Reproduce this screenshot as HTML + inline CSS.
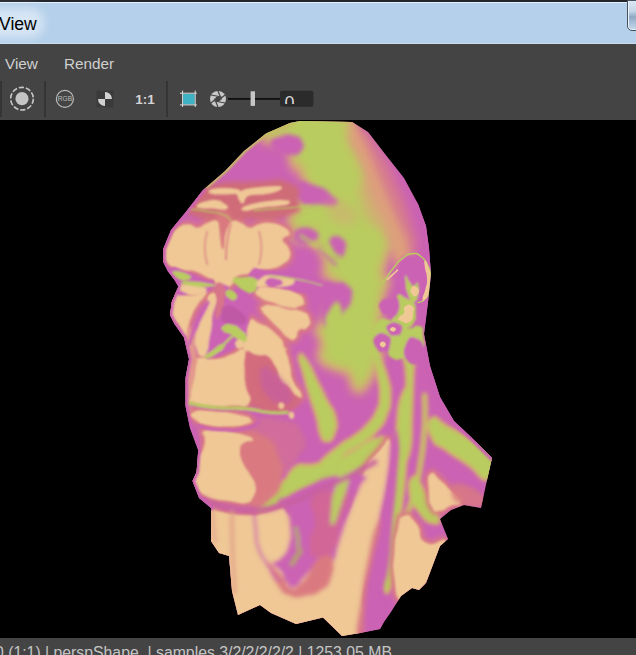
<!DOCTYPE html>
<html>
<head>
<meta charset="utf-8">
<title>Render View</title>
<style>
html,body{margin:0;padding:0;}
body{width:636px;height:655px;overflow:hidden;background:#000;position:relative;font-family:"Liberation Sans",sans-serif;}
#topstrip{position:absolute;left:0;top:0;width:636px;height:2px;background:#23262b;}
#titlebar{position:absolute;left:0;top:2px;width:636px;height:42px;background:#b4d0ea;box-shadow:inset 0 1px 0 #e6f0fa, inset 0 -1px 0 #cadcee;}
#titlebar .glow{position:absolute;left:-20px;top:6px;width:64px;height:30px;border-radius:14px;background:#d6e5f4;filter:blur(5px);}
#titlebar .t{position:absolute;left:-1px;top:12.2px;font-size:17.6px;color:#000;line-height:20px;}
#capbtn{position:absolute;left:627px;top:-2px;width:20px;height:29px;border:1px solid #46525f;border-radius:0 0 0 5px;background:linear-gradient(#dbe8f4 0%,#c4d6e8 35%,#8ea8c2 55%,#a9c0d8 75%,#c6d9ec 100%);box-shadow:inset 1px 0 0 #eef4fb, inset 0 -1px 0 #e4eef8;}
#menubar{position:absolute;left:0;top:44px;width:636px;height:76px;background:#444444;}
.menu{position:absolute;top:9.6px;font-size:15.3px;line-height:20px;color:#cfcfcf;}
.sep{position:absolute;top:37px;width:2px;height:36px;background:#343434;}
#viewport{position:absolute;left:0;top:120px;width:636px;height:518px;background:#000;}
#status{position:absolute;left:0;top:638px;width:636px;height:17px;background:#444444;color:#c4c4c4;font-size:15.8px;line-height:20px;white-space:pre;overflow:hidden;}
#status span{position:absolute;left:-5px;top:4.500px;}
#head{position:absolute;left:0;top:0;}
</style>
</head>
<body>
<div id="topstrip"></div>
<div id="titlebar"><div class="glow"></div><div class="t">View</div><div id="capbtn"></div></div>
<div id="menubar">
  <div class="menu" style="left:5px">View</div>
  <div class="menu" style="left:64px">Render</div>
  <div class="sep" style="left:0px"></div>
  <div class="sep" style="left:44px"></div>
  <div class="sep" style="left:166px"></div>
  <svg id="icons" width="636" height="76" style="position:absolute;left:0;top:0">
    <!-- record icon -->
    <circle cx="22" cy="54.7" r="11.3" fill="none" stroke="#c8c8c8" stroke-width="1.6" stroke-dasharray="5.2 1.9"/>
    <circle cx="22" cy="54.7" r="6.6" fill="#c4c4c4"/>
    <!-- RGB icon -->
    <circle cx="64.9" cy="54.9" r="8.5" fill="none" stroke="#bdbdbd" stroke-width="1.2"/>
    <text x="64.9" y="57.4" font-family="Liberation Sans, sans-serif" font-size="6.6" fill="#bdbdbd" text-anchor="middle">RGB</text>
    <!-- checker icon -->
    <rect x="96.5" y="46.5" width="17" height="17" fill="#3a3a3a"/>
    <path d="M105 54.9 L105 48 A7 7 0 0 1 112 54.9 Z" fill="#d0d0d0"/>
    <path d="M105 54.9 L105 62 A7 7 0 0 1 98 54.9 Z" fill="#d0d0d0"/>
    <!-- 1:1 -->
    <text x="145" y="60" font-family="Liberation Sans, sans-serif" font-size="13.5" font-weight="bold" fill="#d4d4d4" text-anchor="middle">1:1</text>
    <!-- crop icon -->
    <rect x="183.1" y="49.8" width="11.6" height="10.6" fill="#3fb3c4"/>
    <path d="M182.6 46.6 V63 M195.2 46.6 V63 M180 49.2 H196.8 M180 60.9 H196.8" stroke="#dedede" stroke-width="1" fill="none"/>
    <!-- aperture -->
    <circle cx="218" cy="55" r="8" fill="#c8c8c8"/>
    <g stroke="#444" stroke-width="1.2" fill="none">
      <path d="M218 47 L221.5 55.5 M225 51 L217 57.5 M225 59 L214.5 57 M218 63 L214.5 54.5 M211 59 L219 52.5 M211 51 L221.5 53"/>
    </g>
    <circle cx="218" cy="55" r="2.6" fill="#444"/>
    <!-- slider -->
    <rect x="228" y="54" width="52" height="1.800" fill="#101010"/>
    <rect x="250.600" y="47.3" width="4.4" height="14.6" fill="#c6c6c6"/>
    <rect x="280" y="46.8" width="33.4" height="16" rx="2" fill="#2b2b2b"/>
  </svg>
  <div style="position:absolute;left:280px;top:47px;width:33px;height:13px;overflow:hidden;"><div style="position:absolute;left:4.500px;top:1.500px;font-size:18px;line-height:20px;color:#d8d8d8;">0</div></div>
</div>
<div id="viewport">
<svg id="head" width="636" height="518" viewBox="0 120 636 518">
<defs>
<clipPath id="sil"><path id="silp" d="M300 121 L352 122 L368 132 L385 154 L404 178 L418 204 L426 226 L429 248 L431 274 L428 302 L424 334 L430 366 L440 397 L454 421 L470 436 L492 458 L487 480 L481 508 L464 505 L451 510 L440 519 L448 539 L440 546 L426 583 L419 590 L412 588 L401 596 L391 612 L384 622 L380 629 L360 633 L342 636 L323 617.5 L296 624 L271 613 L260 605 L238 615 L232 591 L229 556 L219 553 L211 541 L211 508 L199 498 L192.5 481 L196.6 472 L198.2 450 L190 428 L185.5 406 L185.5 378 L189 359 L186.8 350 L184 337.5 L174.5 324 L170 315 L171.7 302 L178.3 286.6 L174.5 280 L168 271.5 L163.2 262 L163.2 249 L171 230 L187 210.5 L203 190 L225 171 L244 151 L266 133.5 L290 123 Z"/></clipPath>
<filter id="b2" x="-20%" y="-20%" width="140%" height="140%"><feGaussianBlur stdDeviation="2"/></filter>
<filter id="b3" x="-20%" y="-20%" width="140%" height="140%"><feGaussianBlur stdDeviation="3.500"/></filter>
<filter id="b5" x="-20%" y="-20%" width="140%" height="140%"><feGaussianBlur stdDeviation="5"/></filter>
<filter id="b05" x="-20%" y="-20%" width="140%" height="140%"><feGaussianBlur stdDeviation="0.5"/></filter>
<filter id="b12" x="-20%" y="-20%" width="140%" height="140%"><feGaussianBlur stdDeviation="1.2"/></filter>
<filter id="b25" x="-20%" y="-20%" width="140%" height="140%"><feGaussianBlur stdDeviation="2.500"/></filter>
<filter id="b1" x="-20%" y="-20%" width="140%" height="140%"><feGaussianBlur stdDeviation="1"/></filter>
</defs>
<g clip-path="url(#sil)">
<rect x="150" y="115" width="360" height="530" fill="#cb62b3"/>
<!--LAYERS-->
<g id="fade" filter="url(#b5)">
<path d="M347.9 119.8 C349.9 117.2 350.5 114.6 361.7 125.7 C372.8 136.9 369.5 133.6 381.3 153.2 C393.1 172.9 387.5 162.4 397.1 184.7 C406.6 207.0 403.9 199.1 410.0 220.1 C416.2 241.0 417.9 233.8 415.5 247.6 C413.2 261.3 409.8 269.2 403.0 261.3 C396.1 253.5 401.6 244.3 395.1 224.0 C388.5 203.7 389.9 216.1 383.3 200.4 C376.8 184.7 381.3 192.5 375.4 176.8 C369.5 161.1 372.2 167.7 365.6 153.2 C359.1 138.8 361.7 144.7 355.8 133.6 C349.9 122.4 346.0 122.4 347.9 119.8 Z" fill="#d67a8e"/>
<path d="M344.0 119.8 C346.6 119.2 348.6 122.4 355.8 133.6 C363.0 144.7 359.1 138.8 365.6 153.2 C372.2 167.7 369.5 161.1 375.4 176.8 C381.3 192.5 376.8 184.7 383.3 200.4 C389.9 216.1 388.5 209.6 395.1 224.0 C401.6 238.4 399.7 231.9 403.0 243.6 C406.2 255.4 406.9 253.5 404.9 259.4 C403.0 265.3 403.0 271.8 397.1 261.3 C391.2 250.9 394.4 247.6 387.2 227.9 C380.0 208.3 382.0 218.8 375.4 202.4 C368.9 186.0 373.5 194.5 367.6 178.8 C361.7 163.1 364.3 169.6 357.8 155.2 C351.2 140.8 352.5 147.3 347.9 135.6 C343.3 123.8 341.4 120.5 344.0 119.8 Z" fill="#dfa07a" stroke="#dfa07a" stroke-width="6" stroke-linejoin="round"/>
</g>
<g id="halo" filter="url(#b5)">
<path d="M264.2 135.2 C266.3 131.0 266.3 132.0 281.5 127.3 C296.7 122.6 290.3 124.2 309.8 121.0 C329.3 117.9 328.5 118.9 340.0 117.9 C351.5 116.8 342.9 75.4 344.4 117.9 C345.9 160.3 345.9 203.3 344.4 245.2 C342.9 287.1 346.3 247.8 340.0 243.6 C333.7 239.5 335.1 240.5 325.5 232.6 C316.0 224.8 319.6 226.4 311.4 220.1 C303.2 213.8 304.5 220.1 301.0 213.8 C297.5 207.5 297.9 209.6 301.0 201.2 C304.2 192.8 309.4 197.5 310.4 188.6 C311.5 179.7 307.3 184.9 304.2 174.5 C301.0 164.0 300.0 165.9 301.0 157.2 C302.1 148.5 308.0 153.6 307.3 148.4 C306.6 143.1 305.3 145.6 298.8 141.4 C292.3 137.3 295.7 136.3 287.8 135.8 C279.9 135.3 283.1 140.1 275.2 139.9 C267.4 139.7 262.1 139.4 264.2 135.2 Z" fill="#dfa07a" stroke="#dfa07a" stroke-width="9" stroke-linejoin="round"/>
<path d="M293.7 116.3 C309.4 102.1 322.5 109.5 340.9 117.9 C359.2 126.2 342.5 126.2 348.7 141.4 C355.0 156.6 353.8 148.8 359.7 163.5 C365.7 178.1 361.9 171.8 366.7 185.5 C371.4 199.1 368.7 192.8 373.9 204.3 C379.1 215.9 378.2 209.6 382.4 220.1 C386.6 230.5 385.4 225.3 386.5 235.8 C387.5 246.3 387.3 241.0 385.5 251.5 C383.8 262.0 384.0 257.3 381.1 267.2 C378.3 277.2 380.0 272.5 377.0 281.4 C374.1 290.3 376.0 284.0 372.3 294.0 C368.7 303.9 374.4 305.5 366.0 311.3 C357.7 317.0 353.5 323.8 347.2 311.3 C340.9 298.7 346.1 290.3 347.2 273.5 C348.2 256.8 350.3 269.3 350.3 260.9 C350.3 252.6 352.4 258.3 347.2 248.4 C341.9 238.4 344.0 238.4 334.6 231.1 C325.2 223.7 330.4 226.9 318.9 226.4 C307.3 225.8 308.4 233.7 300.0 229.5 C291.6 225.3 287.4 219.0 293.7 213.8 C300.0 208.5 304.7 215.9 318.9 213.8 C333.0 211.7 332.0 211.7 336.2 207.5 C340.4 203.3 338.3 205.4 331.4 201.2 C324.6 197.0 319.9 201.2 315.7 194.9 C311.5 188.6 319.9 190.7 318.9 182.3 C317.8 173.9 318.9 176.0 312.6 169.7 C306.3 163.5 306.3 166.6 300.0 163.5 C293.7 160.3 295.8 176.0 293.7 160.3 C291.6 144.6 278.0 130.4 293.7 116.3 Z" fill="#dfa07a" stroke="#dfa07a" stroke-width="9" stroke-linejoin="round"/>
<path d="M347.2 236.9 C361.8 225.3 373.2 229.5 384.9 236.9 C396.6 244.2 384.7 247.3 382.4 258.9 C380.1 270.4 380.1 256.8 378.0 271.4 C375.9 286.1 375.9 281.9 376.1 302.9 C376.3 323.9 379.0 319.7 378.6 334.3 C378.2 349.0 380.1 341.5 374.8 346.9 C369.6 352.4 372.1 349.9 362.9 350.7 C353.7 351.5 355.6 349.6 347.2 349.4 C338.8 349.2 343.8 355.1 337.7 350.1 C331.7 345.0 331.0 346.9 328.9 334.3 C326.8 321.8 329.6 324.9 331.4 312.3 C333.3 299.7 331.4 310.2 334.6 296.6 C337.7 283.0 336.7 291.4 340.9 271.4 C345.1 251.5 332.5 248.4 347.2 236.9 Z" fill="#dfa07a" stroke="#dfa07a" stroke-width="9" stroke-linejoin="round"/>
<path d="M347.9 283.0 C363.6 274.4 370.6 271.8 381.3 277.1 C392.1 282.3 381.3 284.9 380.2 298.7 C379.0 312.4 380.0 305.2 377.8 318.3 C375.6 331.4 376.9 322.9 373.5 338.0 C370.1 353.1 382.6 355.0 367.6 363.5 C352.5 372.1 342.7 370.7 328.3 363.5 C313.9 356.3 325.0 355.7 324.3 341.9 C323.7 328.2 323.0 335.4 326.3 322.3 C329.6 309.2 327.0 315.7 334.2 302.6 C341.4 289.5 332.2 291.5 347.9 283.0 Z" fill="#dfa07a" stroke="#dfa07a" stroke-width="9" stroke-linejoin="round"/>
<path d="M295.3 237.5 C297.2 241.0 303.1 236.3 312.3 240.4 C321.4 244.5 317.3 241.0 322.6 249.8 C328.0 258.6 327.0 258.6 328.3 266.8 C329.6 275.0 322.3 270.1 326.4 274.3 C330.5 278.6 333.0 275.3 340.6 279.4 C348.1 283.5 342.8 284.2 349.1 286.6 C355.3 289.0 356.0 305.5 359.4 286.6 C362.9 267.7 377.0 248.9 359.4 230.0 C341.8 211.1 328.0 227.5 306.6 230.0 C285.2 232.5 293.4 234.1 295.3 237.5 Z" fill="#dfa07a" stroke="#dfa07a" stroke-width="9" stroke-linejoin="round"/>
<path d="M325.4 325.3 C341.9 319.8 358.1 319.0 376.1 325.3 C394.2 331.6 379.7 333.1 379.7 344.2 C379.7 355.2 378.9 348.9 376.1 358.3 C373.4 367.7 375.3 363.8 371.4 372.5 C367.5 381.1 369.1 378.7 364.3 384.2 C359.6 389.7 361.2 391.3 357.3 389.0 C353.3 386.6 356.5 385.8 352.5 377.2 C348.6 368.5 351.0 371.7 345.5 363.0 C340.0 354.4 342.3 358.3 336.0 351.2 C329.7 344.2 330.1 350.4 326.6 341.8 C323.1 333.1 308.9 330.8 325.4 325.3 Z" fill="#dfa07a" stroke="#dfa07a" stroke-width="9" stroke-linejoin="round"/>
</g>
<g id="halo2" filter="url(#b2)">
<path d="M373.8 340.0 C376.2 342.5 374.4 341.3 376.6 347.5 C378.8 353.8 376.9 348.8 380.4 358.9 C383.8 368.9 383.8 365.2 387.0 377.7 C390.1 390.3 390.1 384.0 389.8 396.6 C389.5 409.2 390.4 404.2 386.0 415.5 C381.6 426.8 384.2 421.8 376.6 430.6 C369.1 439.4 372.8 435.0 363.4 441.9 C354.0 448.8 357.7 445.0 348.3 451.3 C338.9 457.6 344.5 456.4 335.1 460.8 C325.7 465.2 318.7 469.2 320.0 464.5 C321.3 459.8 327.5 455.9 338.9 446.6 C350.2 437.3 344.5 443.7 354.0 436.6 C363.4 429.5 359.6 433.5 367.2 425.3 C374.7 417.1 372.2 421.6 376.6 412.1 C381.0 402.5 379.7 408.1 380.4 396.6 C381.0 385.2 380.4 389.1 378.5 377.7 C376.6 366.4 377.2 372.1 374.7 362.6 C372.2 353.2 372.7 357.0 370.9 349.4 C369.2 341.9 368.5 343.1 369.4 340.0 C370.4 336.9 371.4 337.5 373.8 340.0 Z" fill="#dfa07a" stroke="#dfa07a" stroke-width="3" stroke-linejoin="round"/>
<path d="M299.5 355.9 C300.7 352.0 301.8 354.4 307.7 363.0 C313.6 371.7 310.9 369.3 317.2 381.9 C323.5 394.5 320.7 389.0 326.6 400.8 C332.5 412.5 332.5 406.3 334.9 417.3 C337.2 428.3 336.4 425.9 333.7 433.8 C330.9 441.6 330.9 440.8 326.6 440.8 C322.3 440.8 323.9 441.6 320.7 433.8 C317.6 425.9 320.7 429.8 317.2 417.3 C313.6 404.7 314.4 410.2 310.1 396.0 C305.8 381.9 307.7 388.2 304.2 374.8 C300.7 361.4 298.3 359.9 299.5 355.9 Z" fill="#dfa07a" stroke="#dfa07a" stroke-width="3" stroke-linejoin="round"/>
<path d="M404.4 351.2 C406.8 341.8 411.1 340.2 413.9 348.9 C416.6 357.5 413.5 355.9 412.7 377.2 C411.9 398.4 412.7 387.8 411.5 412.5 C410.3 437.3 412.3 438.5 409.2 451.5 C406.0 464.4 403.3 464.4 402.1 451.5 C400.9 438.5 404.0 437.3 405.6 412.5 C407.2 387.8 407.2 397.6 406.8 377.2 C406.4 356.7 402.1 360.7 404.4 351.2 Z" fill="#dfa07a" stroke="#dfa07a" stroke-width="3" stroke-linejoin="round"/>
<path d="M401.9 396.6 C406.4 384.3 408.1 384.3 410.3 396.6 C412.6 408.9 410.3 410.1 408.7 433.6 C407.0 457.0 407.5 444.7 405.3 467.1 C403.1 489.5 404.7 478.3 401.9 500.7 C399.1 523.0 399.7 511.9 396.9 534.2 C394.1 556.6 395.8 549.9 393.6 567.8 C391.3 585.7 393.6 581.2 390.2 587.9 C386.8 594.6 385.2 594.6 383.5 587.9 C381.8 581.2 383.5 585.7 385.2 567.8 C386.8 549.9 386.3 556.6 388.5 534.2 C390.8 511.9 389.6 523.0 391.9 500.7 C394.1 478.3 393.6 489.5 395.2 467.1 C396.9 444.7 394.7 457.0 396.9 433.6 C399.1 410.1 397.5 408.9 401.9 396.6 Z" fill="#dfa07a" stroke="#dfa07a" stroke-width="3" stroke-linejoin="round"/>
<path d="M424.5 395.0 C424.7 401.7 425.2 401.7 425.0 415.0 C424.8 428.3 425.3 420.0 424.0 435.0 C422.7 450.0 424.0 441.7 421.0 460.0 C418.0 478.3 420.3 470.0 415.0 490.0 C409.7 510.0 411.3 501.7 405.0 520.0 C398.7 538.3 399.0 536.7 396.0 545.0" fill="none" stroke="#dfa07a" stroke-width="5" stroke-linecap="round" stroke-linejoin="round"/>
<path d="M432.1 418.5 C437.2 414.9 434.4 419.6 447.2 426.8 C460.1 434.1 456.0 430.8 470.7 440.3 C485.5 449.8 485.7 442.5 491.5 455.4 C497.4 468.2 496.2 476.1 488.2 478.9 C480.1 481.7 481.0 473.3 467.4 463.8 C453.7 454.3 459.0 459.1 447.2 450.3 C435.5 441.6 437.2 448.2 432.1 437.6 C427.1 427.0 427.1 422.0 432.1 418.5 Z" fill="#dfa07a" stroke="#dfa07a" stroke-width="3" stroke-linejoin="round"/>
<path d="M413.7 477.2 C417.6 474.9 414.3 474.9 422.1 487.2 C429.9 499.6 433.8 502.3 437.2 514.1 C440.5 525.8 438.3 523.6 432.1 522.5 C426.0 521.4 426.0 520.2 418.7 510.7 C411.5 501.2 412.0 505.1 410.3 494.0 C408.7 482.8 409.8 479.4 413.7 477.2 Z" fill="#dfa07a" stroke="#dfa07a" stroke-width="3" stroke-linejoin="round"/>
<path d="M293.7 468.7 C302.1 460.9 301.0 468.5 318.9 464.0 C336.7 459.5 329.9 461.7 347.2 455.2 C364.5 448.7 359.0 450.5 370.8 444.5 C382.5 438.6 379.8 435.0 382.4 437.3 C385.0 439.6 390.4 439.9 378.6 451.4 C366.9 463.0 367.1 461.4 347.2 471.9 C327.3 482.4 336.7 477.7 318.9 482.9 C301.0 488.1 302.1 492.3 293.7 487.6 C285.3 482.9 285.3 476.6 293.7 468.7 Z" fill="#dfa07a" stroke="#dfa07a" stroke-width="3" stroke-linejoin="round"/>
<path d="M258.6 508.6 C260.2 503.3 261.8 505.8 271.2 496.0 C280.6 486.1 273.3 487.0 286.9 479.0 C300.5 471.0 297.4 476.9 312.1 472.1 C326.8 467.3 316.3 472.1 330.9 464.5 C345.6 457.0 343.5 457.1 356.1 449.4 C368.7 441.8 361.3 444.7 368.7 441.6 C376.0 438.4 375.0 437.9 378.1 440.0 C381.3 442.1 381.3 442.8 378.1 447.9 C375.0 452.9 382.3 446.0 368.7 455.1 C355.1 464.2 358.2 464.3 337.2 475.2 C316.3 486.1 324.7 478.8 305.8 487.8 C286.9 496.8 293.7 494.3 280.6 502.3 C267.5 510.2 273.8 509.6 266.5 511.7 C259.1 513.8 257.0 513.8 258.6 508.6 Z" fill="#dfa07a" stroke="#dfa07a" stroke-width="3" stroke-linejoin="round"/>
<path d="M373.9 457.7 C375.5 463.0 372.9 465.1 362.9 482.9 C352.9 500.7 354.5 497.0 344.0 511.2 C333.5 525.3 335.1 525.3 331.4 525.3 C327.8 525.3 327.8 524.3 333.0 511.2 C338.3 498.1 338.8 500.7 347.2 486.0 C355.6 471.4 349.3 476.6 358.2 467.2 C367.1 457.7 372.3 452.5 373.9 457.7 Z" fill="#dfa07a" stroke="#dfa07a" stroke-width="3" stroke-linejoin="round"/>
<path d="M328.7 311.4 C333.7 304.1 337.1 295.2 341.3 308.3 C345.5 321.4 344.4 337.7 341.3 350.8 C338.1 363.9 336.9 354.4 331.8 347.6 C326.8 340.8 327.2 342.4 326.2 330.3 C325.1 318.3 323.6 318.8 328.7 311.4 Z" fill="#dfa07a" stroke="#dfa07a" stroke-width="3" stroke-linejoin="round"/>
<path d="M331.6 522.4 C332.1 512.4 331.2 512.5 337.2 496.6 C343.3 480.7 339.3 487.2 349.8 474.6 C360.3 462.0 366.6 455.7 368.7 458.9 C370.8 462.0 364.5 467.3 356.1 484.0 C347.7 500.8 350.3 495.0 343.5 509.2 C336.7 523.3 339.6 522.1 335.7 526.5 C331.7 530.9 331.0 532.3 331.6 522.4 Z" fill="#dfa07a" stroke="#dfa07a" stroke-width="3" stroke-linejoin="round"/>
<path d="M300.4 235.8 C305.6 238.9 302.5 237.9 316.1 245.2 C329.7 252.6 332.9 253.6 341.3 257.8" fill="none" stroke="#dfa07a" stroke-width="5" stroke-linecap="round" stroke-linejoin="round"/>
</g>
<g id="greenbig" filter="url(#b5)">
<path d="M264.2 135.2 C266.3 131.0 266.3 132.0 281.5 127.3 C296.7 122.6 290.3 124.2 309.8 121.0 C329.3 117.9 328.5 118.9 340.0 117.9 C351.5 116.8 342.9 75.4 344.4 117.9 C345.9 160.3 345.9 203.3 344.4 245.2 C342.9 287.1 346.3 247.8 340.0 243.6 C333.7 239.5 335.1 240.5 325.5 232.6 C316.0 224.8 319.6 226.4 311.4 220.1 C303.2 213.8 304.5 220.1 301.0 213.8 C297.5 207.5 297.9 209.6 301.0 201.2 C304.2 192.8 309.4 197.5 310.4 188.6 C311.5 179.7 307.3 184.9 304.2 174.5 C301.0 164.0 300.0 165.9 301.0 157.2 C302.1 148.5 308.0 153.6 307.3 148.4 C306.6 143.1 305.3 145.6 298.8 141.4 C292.3 137.3 295.7 136.3 287.8 135.8 C279.9 135.3 283.1 140.1 275.2 139.9 C267.4 139.7 262.1 139.4 264.2 135.2 Z" fill="#b9cc5e"/>
<path d="M293.7 116.3 C309.4 102.1 322.5 109.5 340.9 117.9 C359.2 126.2 342.5 126.2 348.7 141.4 C355.0 156.6 353.8 148.8 359.7 163.5 C365.7 178.1 361.9 171.8 366.7 185.5 C371.4 199.1 368.7 192.8 373.9 204.3 C379.1 215.9 378.2 209.6 382.4 220.1 C386.6 230.5 385.4 225.3 386.5 235.8 C387.5 246.3 387.3 241.0 385.5 251.5 C383.8 262.0 384.0 257.3 381.1 267.2 C378.3 277.2 380.0 272.5 377.0 281.4 C374.1 290.3 376.0 284.0 372.3 294.0 C368.7 303.9 374.4 305.5 366.0 311.3 C357.7 317.0 353.5 323.8 347.2 311.3 C340.9 298.7 346.1 290.3 347.2 273.5 C348.2 256.8 350.3 269.3 350.3 260.9 C350.3 252.6 352.4 258.3 347.2 248.4 C341.9 238.4 344.0 238.4 334.6 231.1 C325.2 223.7 330.4 226.9 318.9 226.4 C307.3 225.8 308.4 233.7 300.0 229.5 C291.6 225.3 287.4 219.0 293.7 213.8 C300.0 208.5 304.7 215.9 318.9 213.8 C333.0 211.7 332.0 211.7 336.2 207.5 C340.4 203.3 338.3 205.4 331.4 201.2 C324.6 197.0 319.9 201.2 315.7 194.9 C311.5 188.6 319.9 190.7 318.9 182.3 C317.8 173.9 318.9 176.0 312.6 169.7 C306.3 163.5 306.3 166.6 300.0 163.5 C293.7 160.3 295.8 176.0 293.7 160.3 C291.6 144.6 278.0 130.4 293.7 116.3 Z" fill="#b9cc5e"/>
<path d="M347.2 236.9 C361.8 225.3 373.2 229.5 384.9 236.9 C396.6 244.2 384.7 247.3 382.4 258.9 C380.1 270.4 380.1 256.8 378.0 271.4 C375.9 286.1 375.9 281.9 376.1 302.9 C376.3 323.9 379.0 319.7 378.6 334.3 C378.2 349.0 380.1 341.5 374.8 346.9 C369.6 352.4 372.1 349.9 362.9 350.7 C353.7 351.5 355.6 349.6 347.2 349.4 C338.8 349.2 343.8 355.1 337.7 350.1 C331.7 345.0 331.0 346.9 328.9 334.3 C326.8 321.8 329.6 324.9 331.4 312.3 C333.3 299.7 331.4 310.2 334.6 296.6 C337.7 283.0 336.7 291.4 340.9 271.4 C345.1 251.5 332.5 248.4 347.2 236.9 Z" fill="#b9cc5e"/>
<path d="M347.9 283.0 C363.6 274.4 370.6 271.8 381.3 277.1 C392.1 282.3 381.3 284.9 380.2 298.7 C379.0 312.4 380.0 305.2 377.8 318.3 C375.6 331.4 376.9 322.9 373.5 338.0 C370.1 353.1 382.6 355.0 367.6 363.5 C352.5 372.1 342.7 370.7 328.3 363.5 C313.9 356.3 325.0 355.7 324.3 341.9 C323.7 328.2 323.0 335.4 326.3 322.3 C329.6 309.2 327.0 315.7 334.2 302.6 C341.4 289.5 332.2 291.5 347.9 283.0 Z" fill="#b9cc5e"/>
<path d="M295.3 237.5 C297.2 241.0 303.1 236.3 312.3 240.4 C321.4 244.5 317.3 241.0 322.6 249.8 C328.0 258.6 327.0 258.6 328.3 266.8 C329.6 275.0 322.3 270.1 326.4 274.3 C330.5 278.6 333.0 275.3 340.6 279.4 C348.1 283.5 342.8 284.2 349.1 286.6 C355.3 289.0 356.0 305.5 359.4 286.6 C362.9 267.7 377.0 248.9 359.4 230.0 C341.8 211.1 328.0 227.5 306.6 230.0 C285.2 232.5 293.4 234.1 295.3 237.5 Z" fill="#b9cc5e"/>
<path d="M325.4 325.3 C341.9 319.8 358.1 319.0 376.1 325.3 C394.2 331.6 379.7 333.1 379.7 344.2 C379.7 355.2 378.9 348.9 376.1 358.3 C373.4 367.7 375.3 363.8 371.4 372.5 C367.5 381.1 369.1 378.7 364.3 384.2 C359.6 389.7 361.2 391.3 357.3 389.0 C353.3 386.6 356.5 385.8 352.5 377.2 C348.6 368.5 351.0 371.7 345.5 363.0 C340.0 354.4 342.3 358.3 336.0 351.2 C329.7 344.2 330.1 350.4 326.6 341.8 C323.1 333.1 308.9 330.8 325.4 325.3 Z" fill="#b9cc5e"/>
</g>
<g id="gmag" filter="url(#b2)">
<path d="M323.0 284.5 C327.4 277.5 326.5 282.3 334.3 282.3 C342.2 282.3 340.8 279.4 346.6 284.5 C352.4 289.7 353.0 288.3 351.7 297.7 C350.4 307.2 349.9 304.0 342.8 312.8 C335.8 321.6 337.2 321.0 330.6 324.2 C324.0 327.3 326.2 329.2 323.0 322.3 C319.9 315.3 321.1 316.0 321.1 303.4 C321.1 290.8 318.6 291.6 323.0 284.5 Z" fill="#cb62b3"/>
<path d="M270.8 142.7 C271.6 137.7 273.3 138.9 280.8 136.4 C288.4 133.9 286.3 133.5 293.4 135.2 C300.5 136.8 299.7 136.0 302.2 141.4 C304.7 146.9 304.7 146.9 300.9 151.5 C297.2 156.1 298.4 155.3 290.9 155.3 C283.3 155.3 285.0 155.7 278.3 151.5 C271.6 147.3 269.9 147.7 270.8 142.7 Z" fill="#cb62b3"/>
<path d="M296.9 183.9 C302.1 178.7 304.2 181.8 315.7 185.5 C327.3 189.1 324.6 188.6 331.4 194.9 C338.3 201.2 340.4 201.2 336.2 204.3 C332.0 207.5 330.9 205.4 318.9 204.3 C306.8 203.3 307.3 208.0 300.0 201.2 C292.7 194.4 291.6 189.1 296.9 183.9 Z" fill="#cb62b3"/>
<path d="M296.9 229.5 C303.1 225.8 310.5 226.9 315.7 231.1 C321.0 235.3 318.9 238.4 312.6 242.1 C306.3 245.7 302.1 246.3 296.9 242.1 C291.6 237.9 290.6 233.2 296.9 229.5 Z" fill="#cb62b3"/>
<path d="M330.8 237.9 C334.2 234.7 338.1 234.8 342.8 239.1 C347.6 243.3 346.5 244.7 345.1 250.8 C343.7 256.9 342.8 258.0 338.7 257.4 C334.5 256.7 335.3 255.3 332.6 248.9 C330.0 242.4 327.4 241.2 330.8 237.9 Z" fill="#cb62b3"/>
<path d="M317.9 247.0 C321.1 250.1 321.4 250.4 327.4 256.4 C333.3 262.4 333.0 262.1 335.8 264.9" fill="none" stroke="#cb62b3" stroke-width="2.5" stroke-linecap="round" stroke-linejoin="round"/>
</g>
<g id="greenfine" filter="url(#b2)">
<path d="M373.8 340.0 C376.2 342.5 374.4 341.3 376.6 347.5 C378.8 353.8 376.9 348.8 380.4 358.9 C383.8 368.9 383.8 365.2 387.0 377.7 C390.1 390.3 390.1 384.0 389.8 396.6 C389.5 409.2 390.4 404.2 386.0 415.5 C381.6 426.8 384.2 421.8 376.6 430.6 C369.1 439.4 372.8 435.0 363.4 441.9 C354.0 448.8 357.7 445.0 348.3 451.3 C338.9 457.6 344.5 456.4 335.1 460.8 C325.7 465.2 318.7 469.2 320.0 464.5 C321.3 459.8 327.5 455.9 338.9 446.6 C350.2 437.3 344.5 443.7 354.0 436.6 C363.4 429.5 359.6 433.5 367.2 425.3 C374.7 417.1 372.2 421.6 376.6 412.1 C381.0 402.5 379.7 408.1 380.4 396.6 C381.0 385.2 380.4 389.1 378.5 377.7 C376.6 366.4 377.2 372.1 374.7 362.6 C372.2 353.2 372.7 357.0 370.9 349.4 C369.2 341.9 368.5 343.1 369.4 340.0 C370.4 336.9 371.4 337.5 373.8 340.0 Z" fill="#b9cc5e"/>
<path d="M299.5 355.9 C300.7 352.0 301.8 354.4 307.7 363.0 C313.6 371.7 310.9 369.3 317.2 381.9 C323.5 394.5 320.7 389.0 326.6 400.8 C332.5 412.5 332.5 406.3 334.9 417.3 C337.2 428.3 336.4 425.9 333.7 433.8 C330.9 441.6 330.9 440.8 326.6 440.8 C322.3 440.8 323.9 441.6 320.7 433.8 C317.6 425.9 320.7 429.8 317.2 417.3 C313.6 404.7 314.4 410.2 310.1 396.0 C305.8 381.9 307.7 388.2 304.2 374.8 C300.7 361.4 298.3 359.9 299.5 355.9 Z" fill="#b9cc5e"/>
<path d="M404.4 351.2 C406.8 341.8 411.1 340.2 413.9 348.9 C416.6 357.5 413.5 355.9 412.7 377.2 C411.9 398.4 412.7 387.8 411.5 412.5 C410.3 437.3 412.3 438.5 409.2 451.5 C406.0 464.4 403.3 464.4 402.1 451.5 C400.9 438.5 404.0 437.3 405.6 412.5 C407.2 387.8 407.2 397.6 406.8 377.2 C406.4 356.7 402.1 360.7 404.4 351.2 Z" fill="#b9cc5e"/>
<path d="M401.9 396.6 C406.4 384.3 408.1 384.3 410.3 396.6 C412.6 408.9 410.3 410.1 408.7 433.6 C407.0 457.0 407.5 444.7 405.3 467.1 C403.1 489.5 404.7 478.3 401.9 500.7 C399.1 523.0 399.7 511.9 396.9 534.2 C394.1 556.6 395.8 549.9 393.6 567.8 C391.3 585.7 393.6 581.2 390.2 587.9 C386.8 594.6 385.2 594.6 383.5 587.9 C381.8 581.2 383.5 585.7 385.2 567.8 C386.8 549.9 386.3 556.6 388.5 534.2 C390.8 511.9 389.6 523.0 391.9 500.7 C394.1 478.3 393.6 489.5 395.2 467.1 C396.9 444.7 394.7 457.0 396.9 433.6 C399.1 410.1 397.5 408.9 401.9 396.6 Z" fill="#b9cc5e"/>
<path d="M424.5 395.0 C424.7 401.7 425.2 401.7 425.0 415.0 C424.8 428.3 425.3 420.0 424.0 435.0 C422.7 450.0 424.0 441.7 421.0 460.0 C418.0 478.3 420.3 470.0 415.0 490.0 C409.7 510.0 411.3 501.7 405.0 520.0 C398.7 538.3 399.0 536.7 396.0 545.0" fill="none" stroke="#b9cc5e" stroke-width="3" stroke-linecap="round" stroke-linejoin="round"/>
<path d="M432.1 418.5 C437.2 414.9 434.4 419.6 447.2 426.8 C460.1 434.1 456.0 430.8 470.7 440.3 C485.5 449.8 485.7 442.5 491.5 455.4 C497.4 468.2 496.2 476.1 488.2 478.9 C480.1 481.7 481.0 473.3 467.4 463.8 C453.7 454.3 459.0 459.1 447.2 450.3 C435.5 441.6 437.2 448.2 432.1 437.6 C427.1 427.0 427.1 422.0 432.1 418.5 Z" fill="#b9cc5e"/>
<path d="M413.7 477.2 C417.6 474.9 414.3 474.9 422.1 487.2 C429.9 499.6 433.8 502.3 437.2 514.1 C440.5 525.8 438.3 523.6 432.1 522.5 C426.0 521.4 426.0 520.2 418.7 510.7 C411.5 501.2 412.0 505.1 410.3 494.0 C408.7 482.8 409.8 479.4 413.7 477.2 Z" fill="#b9cc5e"/>
<path d="M293.7 468.7 C302.1 460.9 301.0 468.5 318.9 464.0 C336.7 459.5 329.9 461.7 347.2 455.2 C364.5 448.7 359.0 450.5 370.8 444.5 C382.5 438.6 379.8 435.0 382.4 437.3 C385.0 439.6 390.4 439.9 378.6 451.4 C366.9 463.0 367.1 461.4 347.2 471.9 C327.3 482.4 336.7 477.7 318.9 482.9 C301.0 488.1 302.1 492.3 293.7 487.6 C285.3 482.9 285.3 476.6 293.7 468.7 Z" fill="#b9cc5e"/>
<path d="M258.6 508.6 C260.2 503.3 261.8 505.8 271.2 496.0 C280.6 486.1 273.3 487.0 286.9 479.0 C300.5 471.0 297.4 476.9 312.1 472.1 C326.8 467.3 316.3 472.1 330.9 464.5 C345.6 457.0 343.5 457.1 356.1 449.4 C368.7 441.8 361.3 444.7 368.7 441.6 C376.0 438.4 375.0 437.9 378.1 440.0 C381.3 442.1 381.3 442.8 378.1 447.9 C375.0 452.9 382.3 446.0 368.7 455.1 C355.1 464.2 358.2 464.3 337.2 475.2 C316.3 486.1 324.7 478.8 305.8 487.8 C286.9 496.8 293.7 494.3 280.6 502.3 C267.5 510.2 273.8 509.6 266.5 511.7 C259.1 513.8 257.0 513.8 258.6 508.6 Z" fill="#b9cc5e"/>
<path d="M373.9 457.7 C375.5 463.0 372.9 465.1 362.9 482.9 C352.9 500.7 354.5 497.0 344.0 511.2 C333.5 525.3 335.1 525.3 331.4 525.3 C327.8 525.3 327.8 524.3 333.0 511.2 C338.3 498.1 338.8 500.7 347.2 486.0 C355.6 471.4 349.3 476.6 358.2 467.2 C367.1 457.7 372.3 452.5 373.9 457.7 Z" fill="#b9cc5e"/>
<path d="M328.7 311.4 C333.7 304.1 337.1 295.2 341.3 308.3 C345.5 321.4 344.4 337.7 341.3 350.8 C338.1 363.9 336.9 354.4 331.8 347.6 C326.8 340.8 327.2 342.4 326.2 330.3 C325.1 318.3 323.6 318.8 328.7 311.4 Z" fill="#b9cc5e"/>
<path d="M331.6 522.4 C332.1 512.4 331.2 512.5 337.2 496.6 C343.3 480.7 339.3 487.2 349.8 474.6 C360.3 462.0 366.6 455.7 368.7 458.9 C370.8 462.0 364.5 467.3 356.1 484.0 C347.7 500.8 350.3 495.0 343.5 509.2 C336.7 523.3 339.6 522.1 335.7 526.5 C331.7 530.9 331.0 532.3 331.6 522.4 Z" fill="#b9cc5e"/>
<path d="M300.4 235.8 C305.6 238.9 302.5 237.9 316.1 245.2 C329.7 252.6 332.9 253.6 341.3 257.8" fill="none" stroke="#b9cc5e" stroke-width="3" stroke-linecap="round" stroke-linejoin="round"/>
</g>
<g id="pale" filter="url(#b5)">
<path d="M361.7 182.7 C368.2 177.5 371.5 178.8 381.3 188.6 C391.2 198.4 389.2 199.1 391.2 212.2 C393.1 225.3 393.8 224.0 387.2 227.9 C380.7 231.9 380.0 231.9 371.5 224.0 C363.0 216.1 365.0 218.1 361.7 204.3 C358.4 190.6 355.1 188.0 361.7 182.7 Z" fill="#dba07c" opacity="0.55"/>
<path d="M385.3 227.9 C387.9 223.3 393.1 225.3 399.0 231.9 C404.9 238.4 405.6 243.0 403.0 247.6 C400.3 252.2 397.1 252.2 391.2 245.6 C385.3 239.1 382.6 232.5 385.3 227.9 Z" fill="#dba07c" opacity="0.5"/>
<path d="M328.3 200.4 C334.8 197.8 338.8 197.8 347.9 204.3 C357.1 210.9 358.4 213.5 355.8 220.1 C353.2 226.6 349.2 226.6 340.1 224.0 C330.9 221.4 332.2 220.1 328.3 212.2 C324.3 204.3 321.7 203.0 328.3 200.4 Z" fill="#dba07c" opacity="0.4"/>
</g>
<g id="salmon" filter="url(#b25)">
<path d="M209.5 191.2 C210.9 190.3 215.7 189.1 221.3 188.9 C227.0 188.6 233.8 189.3 237.8 190.0 C241.8 190.8 240.0 192.4 241.4 192.4 C242.8 192.4 240.9 191.0 244.9 190.0 C248.9 189.1 254.3 188.3 261.4 187.7 C268.5 187.1 277.5 186.3 280.3 187.0 C283.1 187.7 278.9 189.9 275.6 191.2 C272.3 192.5 269.0 192.9 263.8 193.6 C258.6 194.3 253.4 193.8 249.6 194.8 C245.8 195.7 246.3 196.7 244.9 198.3 C243.5 200.0 243.7 203.0 242.5 203.0 C241.4 203.0 240.2 200.2 239.0 198.3 C237.8 196.4 239.2 194.5 236.7 193.6 C234.1 192.6 230.5 193.6 226.0 193.6 C221.6 193.6 217.5 194.1 214.2 193.6 C210.9 193.1 208.1 192.2 209.5 191.2 Z" fill="#da7a80" stroke="#da7a80" stroke-width="7" stroke-linejoin="round"/>
<path d="M197.7 205.4 C199.3 203.4 200.9 203.4 207.2 201.8 C213.5 200.3 211.1 199.9 216.6 200.7 C222.1 201.4 220.1 201.8 223.7 204.2 C227.2 206.6 228.0 206.2 227.2 207.7 C226.4 209.3 226.4 208.9 221.3 208.9 C216.2 208.9 218.2 208.1 211.9 207.7 C205.6 207.3 207.2 208.5 202.5 207.7 C197.7 206.9 196.2 207.3 197.7 205.4 Z" fill="#da7a80" stroke="#da7a80" stroke-width="7" stroke-linejoin="round"/>
<path d="M243.7 207.7 C246.9 205.8 246.1 206.2 254.3 204.2 C262.6 202.2 259.1 203.0 268.5 201.8 C277.9 200.7 276.0 200.3 282.6 200.7 C289.3 201.1 290.1 201.4 288.5 203.0 C287.0 204.6 286.2 204.2 277.9 205.4 C269.7 206.6 272.4 205.4 263.8 206.6 C255.1 207.7 258.3 207.7 252.0 208.9 C245.7 210.1 247.7 210.5 244.9 210.1 C242.2 209.7 240.6 209.7 243.7 207.7 Z" fill="#da7a80" stroke="#da7a80" stroke-width="7" stroke-linejoin="round"/>
<path d="M164.7 252.5 C165.5 247.9 166.7 246.3 169.4 240.8 C172.2 235.3 172.1 232.8 176.5 229.0 C180.9 225.1 183.3 224.5 188.3 224.2 C193.3 224.0 193.3 228.1 197.7 227.8 C202.1 227.5 202.8 224.7 207.2 223.1 C211.6 221.4 213.6 219.3 216.6 220.7 C219.6 222.1 218.9 224.3 220.1 229.0 C221.4 233.6 221.0 236.4 221.8 240.8 C222.6 245.2 223.0 248.9 223.7 247.8 C224.4 246.7 223.8 241.0 224.9 236.0 C226.0 231.1 226.5 230.2 228.4 226.6 C230.3 223.0 230.1 221.5 233.1 220.7 C236.1 219.9 237.5 221.4 241.4 223.1 C245.2 224.7 245.5 227.5 249.6 227.8 C253.8 228.1 254.1 225.3 259.1 224.2 C264.0 223.1 265.3 222.5 270.8 223.1 C276.4 223.6 278.2 224.1 282.6 226.6 C287.0 229.1 289.7 230.7 289.7 233.7 C289.7 236.7 282.9 236.3 282.6 239.6 C282.4 242.9 286.9 243.7 288.5 247.8 C290.2 252.0 291.1 253.4 289.7 257.3 C288.3 261.1 287.0 261.6 282.6 264.3 C278.2 267.1 276.4 267.7 270.8 269.1 C265.3 270.4 264.0 269.1 259.1 270.2 C254.1 271.3 254.6 272.4 249.6 273.8 C244.7 275.1 241.7 273.9 237.8 276.1 C234.0 278.3 235.9 280.5 233.1 283.2 C230.4 286.0 229.9 287.1 226.0 287.9 C222.2 288.7 219.4 288.4 216.6 286.7 C213.9 285.1 216.4 283.1 214.2 280.8 C212.0 278.6 211.6 279.5 207.2 277.3 C202.8 275.1 200.9 273.1 195.4 271.4 C189.9 269.8 189.1 271.3 183.6 270.2 C178.1 269.1 175.9 268.9 171.8 266.7 C167.7 264.5 167.5 264.1 165.9 260.8 C164.2 257.5 163.9 257.2 164.7 252.5 Z" fill="#da7a80" stroke="#da7a80" stroke-width="7" stroke-linejoin="round"/>
<path d="M174.5 292.3 C180.2 288.8 179.6 294.8 187.7 295.1 C195.9 295.4 192.8 294.8 199.1 293.2 C205.3 291.6 204.7 289.4 206.6 290.4 C208.5 291.3 207.9 291.0 204.7 296.0 C201.6 301.1 201.6 298.6 197.2 305.5 C192.8 312.4 194.7 309.2 191.5 316.8 C188.4 324.3 189.9 321.8 187.7 328.1 C185.5 334.4 188.1 336.9 184.9 335.7 C181.8 334.4 182.7 330.6 178.3 324.3 C173.9 318.1 174.2 323.1 171.7 316.8 C169.2 310.5 169.8 313.6 170.8 305.5 C171.7 297.3 168.9 295.7 174.5 292.3 Z" fill="#da7a80" stroke="#da7a80" stroke-width="7" stroke-linejoin="round"/>
<path d="M210.4 295.1 C212.7 292.6 214.5 291.6 217.0 294.2 C219.5 296.7 219.2 298.9 217.9 302.6 C216.7 306.4 215.8 305.8 213.2 305.5 C210.6 305.2 210.9 305.2 210.0 301.7 C209.1 298.2 208.1 297.6 210.4 295.1 Z" fill="#da7a80" stroke="#da7a80" stroke-width="7" stroke-linejoin="round"/>
<path d="M255.7 290.4 C256.9 286.6 256.3 287.2 265.1 286.6 C273.9 286.0 272.0 286.6 282.1 288.5 C292.1 290.4 288.1 288.2 295.3 292.3 C302.5 296.4 302.5 296.0 303.8 300.8 C305.0 305.5 304.4 304.2 299.1 306.4 C293.7 308.6 296.5 308.6 287.7 307.4 C278.9 306.1 281.4 305.8 272.6 302.6 C263.8 299.5 267.0 302.0 261.3 297.9 C255.7 293.8 254.4 294.2 255.7 290.4 Z" fill="#da7a80" stroke="#da7a80" stroke-width="7" stroke-linejoin="round"/>
<path d="M263.2 306.4 C267.3 304.5 266.4 304.5 274.5 305.5 C282.7 306.4 278.9 307.4 287.7 309.2 C296.5 311.1 293.7 308.0 300.9 311.1 C308.2 314.3 307.5 313.0 309.4 318.7 C311.3 324.3 310.1 324.3 306.6 328.1 C303.1 331.9 302.8 326.5 299.1 330.0 C295.3 333.5 299.1 336.0 295.3 338.5 C291.5 341.0 293.4 341.0 287.7 337.5 C282.1 334.1 284.6 334.4 278.3 328.1 C272.0 321.8 274.2 324.3 268.9 318.7 C263.5 313.0 264.2 315.2 262.3 311.1 C260.4 307.0 259.1 308.3 263.2 306.4 Z" fill="#da7a80" stroke="#da7a80" stroke-width="7" stroke-linejoin="round"/>
<path d="M248.1 323.4 C252.5 314.6 253.1 321.5 261.3 324.3 C269.5 327.2 266.4 325.6 272.6 331.9 C278.9 338.2 277.0 336.9 280.2 343.2 C283.3 349.5 292.8 348.2 282.1 350.8 C271.4 353.3 259.4 359.9 248.1 350.8 C236.8 341.6 243.7 332.2 248.1 323.4 Z" fill="#da7a80" stroke="#da7a80" stroke-width="7" stroke-linejoin="round"/>
<path d="M200.2 357.7 C207.1 356.2 206.5 359.9 217.2 358.7 C227.9 357.4 223.5 356.8 232.3 354.0 C241.1 351.1 239.5 345.8 243.6 350.2 C247.7 354.6 243.9 355.8 244.5 367.2 C245.2 378.5 243.9 372.2 245.5 384.2 C247.0 396.1 253.6 395.8 249.2 403.0 C244.8 410.3 243.6 404.6 232.3 405.8 C220.9 407.1 228.5 407.7 215.3 406.8 C202.1 405.8 200.8 406.8 192.6 403.0 C184.5 399.2 190.1 404.3 190.8 395.5 C191.4 386.7 192.6 387.3 194.5 376.6 C196.4 365.9 194.5 369.7 196.4 363.4 C198.3 357.1 193.3 359.3 200.2 357.7 Z" fill="#da7a80" stroke="#da7a80" stroke-width="7" stroke-linejoin="round"/>
<path d="M246.4 324.7 C252.1 319.7 250.1 322.1 260.6 325.7 C271.0 329.2 269.5 327.2 277.7 335.5 C286.0 343.8 281.2 340.5 285.3 350.6 C289.4 360.6 287.5 355.8 290.0 365.7 C292.5 375.5 289.1 370.6 292.8 380.0 C296.6 389.4 300.0 388.7 301.3 394.0 C302.6 399.2 301.3 398.4 296.8 395.8 C292.3 393.3 293.3 391.7 287.9 386.4 C282.5 381.1 284.9 386.9 280.6 380.0 C276.2 373.1 280.3 374.2 274.9 365.7 C269.6 357.1 272.4 359.4 264.5 354.3 C256.7 349.3 258.0 351.6 251.3 350.6 C244.7 349.5 247.1 354.4 244.5 351.1 C241.9 347.9 243.0 349.6 243.6 340.8 C244.2 331.9 240.8 329.7 246.4 324.7 Z" fill="#da7a80" stroke="#da7a80" stroke-width="7" stroke-linejoin="round"/>
<path d="M234.2 340.8 C236.4 339.0 239.1 339.2 241.7 341.1 C244.3 343.0 244.3 344.7 242.1 346.4 C239.9 348.2 237.7 348.3 235.1 346.4 C232.5 344.5 231.9 342.5 234.2 340.8 Z" fill="#da7a80" stroke="#da7a80" stroke-width="7" stroke-linejoin="round"/>
<path d="M193.0 412.4 C199.3 409.2 200.0 410.4 215.4 411.2 C230.7 412.0 227.2 412.0 239.0 414.7 C250.8 417.5 248.4 416.3 250.8 419.4 C253.1 422.6 253.9 421.8 246.0 424.2 C238.2 426.5 239.7 426.1 227.2 426.5 C214.6 426.9 218.5 427.3 208.3 425.3 C198.1 423.4 201.6 424.9 196.5 420.6 C191.4 416.3 186.7 415.5 193.0 412.4 Z" fill="#da7a80" stroke="#da7a80" stroke-width="7" stroke-linejoin="round"/>
<path d="M203.6 431.2 C207.0 429.0 208.3 429.4 217.7 430.0 C227.2 430.7 229.5 431.1 239.0 433.6 C248.4 436.1 251.9 437.0 253.1 439.5 C254.4 442.0 247.1 440.2 243.7 443.0 C240.2 445.8 240.5 445.1 240.1 450.1 C239.8 455.1 240.0 455.6 242.5 461.9 C245.0 468.2 246.1 467.4 249.6 473.7 C253.0 480.0 254.5 479.2 255.5 485.5 C256.4 491.8 255.6 492.5 253.1 497.3 C250.6 502.0 251.1 501.9 246.0 503.2 C241.0 504.4 239.9 502.6 234.2 502.0 C228.6 501.4 229.8 501.4 224.8 500.8 C219.8 500.2 221.0 501.2 215.4 499.6 C209.7 498.1 208.9 498.7 203.6 494.9 C198.2 491.1 198.2 491.1 195.3 485.5 C192.5 479.8 192.3 480.6 193.0 473.7 C193.6 466.8 194.9 466.4 197.7 459.5 C200.5 452.6 201.7 453.4 203.6 447.7 C205.5 442.1 204.8 442.7 204.8 438.3 C204.8 433.9 200.1 433.4 203.6 431.2 Z" fill="#da7a80" stroke="#da7a80" stroke-width="7" stroke-linejoin="round"/>
<path d="M209.9 509.2 L231.9 513.9 L255.5 515.5 L283.8 507.6 L288.5 513.9 L305.8 502.9 L330.9 491.9 L343.5 521.8 L356.1 496.6 L371.8 471.4 L381.3 458.9 L381.3 496.6 L368.7 534.3 L362.4 581.5 L359.2 641.3 L208.3 641.3 L208.3 540.6 Z" fill="#da7a80" stroke="#da7a80" stroke-width="7" stroke-linejoin="round"/>
<path d="M378.6 451.4 C388.1 441.5 388.1 433.1 391.2 443.6 C394.3 454.1 391.7 456.2 388.1 482.9 C384.4 509.6 385.6 497.6 380.2 523.8 C374.7 550.0 377.5 537.4 371.7 561.5 C365.9 585.6 366.4 574.1 362.9 596.1 C359.4 618.1 376.0 617.1 361.3 627.5 C346.6 638.0 329.9 640.1 318.9 627.5 C307.9 615.0 321.0 617.1 328.3 589.8 C335.6 562.6 332.5 576.2 340.9 545.8 C349.3 515.4 346.1 522.7 353.5 498.6 C360.8 474.5 354.5 489.2 362.9 473.5 C371.3 457.7 369.2 461.4 378.6 451.4 Z" fill="#da7a80" stroke="#da7a80" stroke-width="7" stroke-linejoin="round"/>
<path d="M403.8 515.9 C410.1 513.8 409.0 514.9 416.4 523.8 C423.7 532.7 415.8 536.9 425.8 542.6 C435.7 548.4 442.0 535.8 446.2 541.1 C450.4 546.3 445.2 544.2 438.4 558.4 C431.6 572.5 434.7 571.5 425.8 583.5 C416.9 595.6 420.0 588.8 411.6 594.5 C403.2 600.3 406.4 606.6 400.6 600.8 C394.9 595.1 396.4 593.5 394.3 577.2 C392.2 561.0 393.3 567.8 394.3 552.1 C395.4 536.4 394.3 542.1 397.5 530.1 C400.6 518.0 397.5 518.0 403.8 515.9 Z" fill="#da7a80" stroke="#da7a80" stroke-width="7" stroke-linejoin="round"/>
<path d="M430.5 473.8 C434.4 470.5 433.8 474.9 440.5 480.5 C447.2 486.1 443.9 483.3 450.6 490.6 C457.3 497.9 460.7 497.3 460.7 502.3 C460.7 507.4 457.3 502.9 450.6 505.7 C443.9 508.5 446.7 510.2 440.5 510.7 C434.4 511.3 436.1 514.1 432.1 507.4 C428.2 500.7 429.4 501.8 428.8 490.6 C428.2 479.4 426.6 477.2 430.5 473.8 Z" fill="#da7a80" stroke="#da7a80" stroke-width="7" stroke-linejoin="round"/>
<path d="M296.9 558.4 C302.1 539.5 304.2 558.4 312.6 570.9 C321.0 583.5 319.9 577.2 322.0 596.1 C324.1 615.0 327.3 617.1 318.9 627.5 C310.5 638.0 304.2 650.6 296.9 627.5 C289.5 604.5 291.6 577.2 296.9 558.4 Z" fill="#da7a80" stroke="#da7a80" stroke-width="7" stroke-linejoin="round"/>
<path d="M244.5 351.1 C249.6 340.1 250.2 348.3 260.6 351.1 C270.9 354.0 265.6 351.1 275.7 359.6 C285.7 368.1 284.5 360.3 290.8 376.6 C297.0 393.0 308.4 399.2 294.5 408.7 C280.7 418.1 265.6 413.1 249.2 404.9 C232.9 396.7 247.0 402.1 245.5 384.2 C243.9 366.2 239.5 362.1 244.5 351.1 Z" fill="#d36c7c"/>
<path d="M193.0 198.3 C198.9 188.1 190.3 190.8 210.7 185.3 C231.1 179.8 228.0 182.6 254.3 181.8 C280.7 181.0 275.2 176.7 289.7 183.0 C304.3 189.3 298.0 190.0 298.0 200.7 C298.0 211.3 307.4 208.5 289.7 214.8 C272.0 221.1 277.1 219.1 244.9 219.5 C212.7 219.9 210.3 223.1 193.0 216.0 C175.7 208.9 187.1 208.5 193.0 198.3 Z" fill="#cf6c78"/>
<path d="M216.6 217.2 C220.1 206.2 226.4 206.2 230.8 217.2 C235.1 228.2 233.1 239.2 229.6 250.2 C226.0 261.2 224.5 261.2 220.1 250.2 C215.8 239.2 213.1 228.2 216.6 217.2 Z" fill="#da7a80"/>
<path d="M241.3 433.6 C249.2 426.5 252.3 428.1 264.9 435.9 C277.5 443.8 273.6 442.2 279.1 457.2 C284.6 472.1 284.6 466.6 281.4 480.8 C278.3 494.9 279.8 491.0 269.6 499.6 C259.4 508.3 257.0 513.0 250.8 506.7 C244.5 500.4 253.9 497.3 250.8 480.8 C247.6 464.2 244.5 472.9 241.3 457.2 C238.2 441.4 233.5 440.7 241.3 433.6 Z" fill="#da7a80"/>
<path d="M181.3 331.3 C183.8 324.4 189.5 322.5 194.5 333.2 C199.6 343.9 197.0 340.1 196.4 363.4 C195.8 386.7 196.4 389.8 192.6 403.0 C188.9 416.2 187.6 411.8 185.1 403.0 C182.6 394.2 184.5 393.0 185.1 376.6 C185.7 360.3 188.2 369.1 187.0 354.0 C185.7 338.9 178.8 338.2 181.3 331.3 Z" fill="#e39a8c"/>
<path d="M214.2 286.6 C217.3 277.8 220.4 281.6 225.5 286.6 C230.5 291.6 229.2 292.3 229.2 301.7 C229.2 311.1 229.9 311.1 225.5 314.9 C221.1 318.7 219.8 322.5 216.0 313.0 C212.3 303.6 211.0 295.4 214.2 286.6 Z" fill="#da7a80"/>
</g>
<g id="peach" filter="url(#b12)">
<path d="M209.5 191.2 C210.9 190.3 215.7 189.1 221.3 188.9 C227.0 188.6 233.8 189.3 237.8 190.0 C241.8 190.8 240.0 192.4 241.4 192.4 C242.8 192.4 240.9 191.0 244.9 190.0 C248.9 189.1 254.3 188.3 261.4 187.7 C268.5 187.1 277.5 186.3 280.3 187.0 C283.1 187.7 278.9 189.9 275.6 191.2 C272.3 192.5 269.0 192.9 263.8 193.6 C258.6 194.3 253.4 193.8 249.6 194.8 C245.8 195.7 246.3 196.7 244.9 198.3 C243.5 200.0 243.7 203.0 242.5 203.0 C241.4 203.0 240.2 200.2 239.0 198.3 C237.8 196.4 239.2 194.5 236.7 193.6 C234.1 192.6 230.5 193.6 226.0 193.6 C221.6 193.6 217.5 194.1 214.2 193.6 C210.9 193.1 208.1 192.2 209.5 191.2 Z" fill="#efc896" stroke="#efc896" stroke-width="1.6" stroke-linejoin="round"/>
<path d="M197.7 205.4 C199.3 203.4 200.9 203.4 207.2 201.8 C213.5 200.3 211.1 199.9 216.6 200.7 C222.1 201.4 220.1 201.8 223.7 204.2 C227.2 206.6 228.0 206.2 227.2 207.7 C226.4 209.3 226.4 208.9 221.3 208.9 C216.2 208.9 218.2 208.1 211.9 207.7 C205.6 207.3 207.2 208.5 202.5 207.7 C197.7 206.9 196.2 207.3 197.7 205.4 Z" fill="#efc896" stroke="#efc896" stroke-width="1.6" stroke-linejoin="round"/>
<path d="M243.7 207.7 C246.9 205.8 246.1 206.2 254.3 204.2 C262.6 202.2 259.1 203.0 268.5 201.8 C277.9 200.7 276.0 200.3 282.6 200.7 C289.3 201.1 290.1 201.4 288.5 203.0 C287.0 204.6 286.2 204.2 277.9 205.4 C269.7 206.6 272.4 205.4 263.8 206.6 C255.1 207.7 258.3 207.7 252.0 208.9 C245.7 210.1 247.7 210.5 244.9 210.1 C242.2 209.7 240.6 209.7 243.7 207.7 Z" fill="#efc896" stroke="#efc896" stroke-width="1.6" stroke-linejoin="round"/>
<path d="M164.7 252.5 C165.5 247.9 166.7 246.3 169.4 240.8 C172.2 235.3 172.1 232.8 176.5 229.0 C180.9 225.1 183.3 224.5 188.3 224.2 C193.3 224.0 193.3 228.1 197.7 227.8 C202.1 227.5 202.8 224.7 207.2 223.1 C211.6 221.4 213.6 219.3 216.6 220.7 C219.6 222.1 218.9 224.3 220.1 229.0 C221.4 233.6 221.0 236.4 221.8 240.8 C222.6 245.2 223.0 248.9 223.7 247.8 C224.4 246.7 223.8 241.0 224.9 236.0 C226.0 231.1 226.5 230.2 228.4 226.6 C230.3 223.0 230.1 221.5 233.1 220.7 C236.1 219.9 237.5 221.4 241.4 223.1 C245.2 224.7 245.5 227.5 249.6 227.8 C253.8 228.1 254.1 225.3 259.1 224.2 C264.0 223.1 265.3 222.5 270.8 223.1 C276.4 223.6 278.2 224.1 282.6 226.6 C287.0 229.1 289.7 230.7 289.7 233.7 C289.7 236.7 282.9 236.3 282.6 239.6 C282.4 242.9 286.9 243.7 288.5 247.8 C290.2 252.0 291.1 253.4 289.7 257.3 C288.3 261.1 287.0 261.6 282.6 264.3 C278.2 267.1 276.4 267.7 270.8 269.1 C265.3 270.4 264.0 269.1 259.1 270.2 C254.1 271.3 254.6 272.4 249.6 273.8 C244.7 275.1 241.7 273.9 237.8 276.1 C234.0 278.3 235.9 280.5 233.1 283.2 C230.4 286.0 229.9 287.1 226.0 287.9 C222.2 288.7 219.4 288.4 216.6 286.7 C213.9 285.1 216.4 283.1 214.2 280.8 C212.0 278.6 211.6 279.5 207.2 277.3 C202.8 275.1 200.9 273.1 195.4 271.4 C189.9 269.8 189.1 271.3 183.6 270.2 C178.1 269.1 175.9 268.9 171.8 266.7 C167.7 264.5 167.5 264.1 165.9 260.8 C164.2 257.5 163.9 257.2 164.7 252.5 Z" fill="#efc896"/>
<path d="M174.5 292.3 C180.2 288.8 179.6 294.8 187.7 295.1 C195.9 295.4 192.8 294.8 199.1 293.2 C205.3 291.6 204.7 289.4 206.6 290.4 C208.5 291.3 207.9 291.0 204.7 296.0 C201.6 301.1 201.6 298.6 197.2 305.5 C192.8 312.4 194.7 309.2 191.5 316.8 C188.4 324.3 189.9 321.8 187.7 328.1 C185.5 334.4 188.1 336.9 184.9 335.7 C181.8 334.4 182.7 330.6 178.3 324.3 C173.9 318.1 174.2 323.1 171.7 316.8 C169.2 310.5 169.8 313.6 170.8 305.5 C171.7 297.3 168.9 295.7 174.5 292.3 Z" fill="#efc896"/>
<path d="M210.4 295.1 C212.7 292.6 214.5 291.6 217.0 294.2 C219.5 296.7 219.2 298.9 217.9 302.6 C216.7 306.4 215.8 305.8 213.2 305.5 C210.6 305.2 210.9 305.2 210.0 301.7 C209.1 298.2 208.1 297.6 210.4 295.1 Z" fill="#efc896"/>
<path d="M255.7 290.4 C256.9 286.6 256.3 287.2 265.1 286.6 C273.9 286.0 272.0 286.6 282.1 288.5 C292.1 290.4 288.1 288.2 295.3 292.3 C302.5 296.4 302.5 296.0 303.8 300.8 C305.0 305.5 304.4 304.2 299.1 306.4 C293.7 308.6 296.5 308.6 287.7 307.4 C278.9 306.1 281.4 305.8 272.6 302.6 C263.8 299.5 267.0 302.0 261.3 297.9 C255.7 293.8 254.4 294.2 255.7 290.4 Z" fill="#efc896"/>
<path d="M263.2 306.4 C267.3 304.5 266.4 304.5 274.5 305.5 C282.7 306.4 278.9 307.4 287.7 309.2 C296.5 311.1 293.7 308.0 300.9 311.1 C308.2 314.3 307.5 313.0 309.4 318.7 C311.3 324.3 310.1 324.3 306.6 328.1 C303.1 331.9 302.8 326.5 299.1 330.0 C295.3 333.5 299.1 336.0 295.3 338.5 C291.5 341.0 293.4 341.0 287.7 337.5 C282.1 334.1 284.6 334.4 278.3 328.1 C272.0 321.8 274.2 324.3 268.9 318.7 C263.5 313.0 264.2 315.2 262.3 311.1 C260.4 307.0 259.1 308.3 263.2 306.4 Z" fill="#efc896"/>
<path d="M248.1 323.4 C252.5 314.6 253.1 321.5 261.3 324.3 C269.5 327.2 266.4 325.6 272.6 331.9 C278.9 338.2 277.0 336.9 280.2 343.2 C283.3 349.5 292.8 348.2 282.1 350.8 C271.4 353.3 259.4 359.9 248.1 350.8 C236.8 341.6 243.7 332.2 248.1 323.4 Z" fill="#efc896"/>
<path d="M200.2 357.7 C207.1 356.2 206.5 359.9 217.2 358.7 C227.9 357.4 223.5 356.8 232.3 354.0 C241.1 351.1 239.5 345.8 243.6 350.2 C247.7 354.6 243.9 355.8 244.5 367.2 C245.2 378.5 243.9 372.2 245.5 384.2 C247.0 396.1 253.6 395.8 249.2 403.0 C244.8 410.3 243.6 404.6 232.3 405.8 C220.9 407.1 228.5 407.7 215.3 406.8 C202.1 405.8 200.8 406.8 192.6 403.0 C184.5 399.2 190.1 404.3 190.8 395.5 C191.4 386.7 192.6 387.3 194.5 376.6 C196.4 365.9 194.5 369.7 196.4 363.4 C198.3 357.1 193.3 359.3 200.2 357.7 Z" fill="#efc896"/>
<path d="M246.4 324.7 C252.1 319.7 250.1 322.1 260.6 325.7 C271.0 329.2 269.5 327.2 277.7 335.5 C286.0 343.8 281.2 340.5 285.3 350.6 C289.4 360.6 287.5 355.8 290.0 365.7 C292.5 375.5 289.1 370.6 292.8 380.0 C296.6 389.4 300.0 388.7 301.3 394.0 C302.6 399.2 301.3 398.4 296.8 395.8 C292.3 393.3 293.3 391.7 287.9 386.4 C282.5 381.1 284.9 386.9 280.6 380.0 C276.2 373.1 280.3 374.2 274.9 365.7 C269.6 357.1 272.4 359.4 264.5 354.3 C256.7 349.3 258.0 351.6 251.3 350.6 C244.7 349.5 247.1 354.4 244.5 351.1 C241.9 347.9 243.0 349.6 243.6 340.8 C244.2 331.9 240.8 329.7 246.4 324.7 Z" fill="#efc896"/>
<path d="M234.2 340.8 C236.4 339.0 239.1 339.2 241.7 341.1 C244.3 343.0 244.3 344.7 242.1 346.4 C239.9 348.2 237.7 348.3 235.1 346.4 C232.5 344.5 231.9 342.5 234.2 340.8 Z" fill="#efc896"/>
<path d="M193.0 412.4 C199.3 409.2 200.0 410.4 215.4 411.2 C230.7 412.0 227.2 412.0 239.0 414.7 C250.8 417.5 248.4 416.3 250.8 419.4 C253.1 422.6 253.9 421.8 246.0 424.2 C238.2 426.5 239.7 426.1 227.2 426.5 C214.6 426.9 218.5 427.3 208.3 425.3 C198.1 423.4 201.6 424.9 196.5 420.6 C191.4 416.3 186.7 415.5 193.0 412.4 Z" fill="#efc896"/>
<path d="M203.6 431.2 C207.0 429.0 208.3 429.4 217.7 430.0 C227.2 430.7 229.5 431.1 239.0 433.6 C248.4 436.1 251.9 437.0 253.1 439.5 C254.4 442.0 247.1 440.2 243.7 443.0 C240.2 445.8 240.5 445.1 240.1 450.1 C239.8 455.1 240.0 455.6 242.5 461.9 C245.0 468.2 246.1 467.4 249.6 473.7 C253.0 480.0 254.5 479.2 255.5 485.5 C256.4 491.8 255.6 492.5 253.1 497.3 C250.6 502.0 251.1 501.9 246.0 503.2 C241.0 504.4 239.9 502.6 234.2 502.0 C228.6 501.4 229.8 501.4 224.8 500.8 C219.8 500.2 221.0 501.2 215.4 499.6 C209.7 498.1 208.9 498.7 203.6 494.9 C198.2 491.1 198.2 491.1 195.3 485.5 C192.5 479.8 192.3 480.6 193.0 473.7 C193.6 466.8 194.9 466.4 197.7 459.5 C200.5 452.6 201.7 453.4 203.6 447.7 C205.5 442.1 204.8 442.7 204.8 438.3 C204.8 433.9 200.1 433.4 203.6 431.2 Z" fill="#efc896"/>
<path d="M209.9 509.2 L231.9 513.9 L255.5 515.5 L283.8 507.6 L288.5 513.9 L305.8 502.9 L330.9 491.9 L343.5 521.8 L356.1 496.6 L371.8 471.4 L381.3 458.9 L381.3 496.6 L368.7 534.3 L362.4 581.5 L359.2 641.3 L208.3 641.3 L208.3 540.6 Z" fill="#efc896"/>
<path d="M378.6 451.4 C388.1 441.5 388.1 433.1 391.2 443.6 C394.3 454.1 391.7 456.2 388.1 482.9 C384.4 509.6 385.6 497.6 380.2 523.8 C374.7 550.0 377.5 537.4 371.7 561.5 C365.9 585.6 366.4 574.1 362.9 596.1 C359.4 618.1 376.0 617.1 361.3 627.5 C346.6 638.0 329.9 640.1 318.9 627.5 C307.9 615.0 321.0 617.1 328.3 589.8 C335.6 562.6 332.5 576.2 340.9 545.8 C349.3 515.4 346.1 522.7 353.5 498.6 C360.8 474.5 354.5 489.2 362.9 473.5 C371.3 457.7 369.2 461.4 378.6 451.4 Z" fill="#efc896"/>
<path d="M403.8 515.9 C410.1 513.8 409.0 514.9 416.4 523.8 C423.7 532.7 415.8 536.9 425.8 542.6 C435.7 548.4 442.0 535.8 446.2 541.1 C450.4 546.3 445.2 544.2 438.4 558.4 C431.6 572.5 434.7 571.5 425.8 583.5 C416.9 595.6 420.0 588.8 411.6 594.5 C403.2 600.3 406.4 606.6 400.6 600.8 C394.9 595.1 396.4 593.5 394.3 577.2 C392.2 561.0 393.3 567.8 394.3 552.1 C395.4 536.4 394.3 542.1 397.5 530.1 C400.6 518.0 397.5 518.0 403.8 515.9 Z" fill="#efc896"/>
<path d="M430.5 473.8 C434.4 470.5 433.8 474.9 440.5 480.5 C447.2 486.1 443.9 483.3 450.6 490.6 C457.3 497.9 460.7 497.3 460.7 502.3 C460.7 507.4 457.3 502.9 450.6 505.7 C443.9 508.5 446.7 510.2 440.5 510.7 C434.4 511.3 436.1 514.1 432.1 507.4 C428.2 500.7 429.4 501.8 428.8 490.6 C428.2 479.4 426.6 477.2 430.5 473.8 Z" fill="#efc896"/>
<path d="M296.9 558.4 C302.1 539.5 304.2 558.4 312.6 570.9 C321.0 583.5 319.9 577.2 322.0 596.1 C324.1 615.0 327.3 617.1 318.9 627.5 C310.5 638.0 304.2 650.6 296.9 627.5 C289.5 604.5 291.6 577.2 296.9 558.4 Z" fill="#efc896"/>
</g>
<g id="over" filter="url(#b2)">
<path d="M250.8 424.2 C255.5 417.9 261.8 416.3 279.1 419.4 C296.4 422.6 296.4 421.0 302.6 433.6 C308.9 446.2 305.8 444.6 297.9 457.2 C290.1 469.7 286.9 471.3 279.1 471.3 C271.2 471.3 279.1 468.2 274.3 457.2 C269.6 446.2 272.8 449.3 264.9 438.3 C257.0 427.3 246.0 430.4 250.8 424.2 Z" fill="#da7a80" opacity="0.45"/>
<path d="M460.7 483.9 C471.3 485.6 477.4 489.7 484.2 497.3 C490.9 504.9 488.6 504.5 480.8 506.7 C473.0 508.9 470.2 508.8 460.7 504.0 C451.2 499.2 452.3 499.0 452.3 492.3 C452.3 485.6 450.0 482.2 460.7 483.9 Z" fill="#da7a80" opacity="0.8"/>
<path d="M278.6 501.2 C279.4 496.0 278.6 501.2 289.0 496.0 C299.4 490.8 295.0 492.1 309.7 485.6 C324.5 479.1 315.4 480.0 333.1 476.5 C350.9 473.0 354.3 471.3 363.0 475.2 C371.6 479.1 363.4 476.6 359.1 488.2 C354.8 499.8 356.7 492.1 350.0 510.0 C343.3 527.9 344.7 525.0 339.1 541.9 C333.5 558.9 337.7 554.6 333.1 560.9 C328.5 567.2 331.4 559.2 325.3 560.9 C319.3 562.6 321.9 560.9 314.9 566.1 C308.0 571.3 311.5 569.6 304.5 576.5 C297.6 583.4 300.2 585.2 294.2 586.9 C288.1 588.6 290.7 586.9 286.4 581.7 C282.0 576.5 285.5 577.4 281.2 571.3 C276.8 565.2 273.4 567.8 273.4 563.5 C273.4 559.2 276.0 564.4 281.2 558.3 C286.4 552.3 285.9 555.7 289.0 545.3 C292.0 534.9 291.1 538.4 290.3 527.1 C289.4 515.9 290.3 520.2 286.4 511.6 C282.5 502.9 277.7 506.4 278.6 501.2 Z" fill="#cb62b3"/>
<path d="M391.8 439.6 C395.5 426.8 396.6 426.8 398.2 439.6 C399.8 452.4 398.7 449.2 396.6 478.1 C394.5 506.9 394.5 497.3 391.8 526.2 C389.1 555.0 391.8 541.1 388.6 564.6 C385.4 588.1 384.9 572.1 382.2 596.7 C379.5 621.2 387.5 624.4 380.6 638.3 C373.6 652.2 366.7 652.2 361.3 638.3 C356.0 624.4 361.3 623.4 364.6 596.7 C367.8 570.0 366.2 583.8 371.0 558.2 C375.8 532.6 373.6 546.5 379.0 519.7 C384.3 493.0 382.7 504.8 387.0 478.1 C391.3 451.4 388.1 452.4 391.8 439.6 Z" fill="#cb62b3"/>
<path d="M375.8 526.2 C380.0 515.5 381.9 513.3 380.6 526.2 C379.3 539.0 376.7 541.1 371.9 564.6 C367.1 588.1 369.1 572.1 366.2 596.7 C363.2 621.2 366.2 624.4 362.9 638.3 C359.7 652.2 357.1 652.2 356.5 638.3 C356.0 624.4 357.6 623.4 361.3 596.7 C365.1 570.0 362.9 581.7 367.8 558.2 C372.6 534.7 371.5 536.8 375.8 526.2 Z" fill="#da7a80" opacity="0.8"/>
<path d="M312.3 498.6 C318.4 488.2 321.0 492.5 333.1 490.8 C345.2 489.0 346.1 483.0 348.7 493.4 C351.3 503.8 345.7 503.8 340.9 521.9 C336.1 540.1 342.2 535.8 334.4 547.9 C326.6 560.0 325.8 560.0 317.5 558.3 C309.3 556.6 310.6 554.8 309.7 542.7 C308.9 530.6 314.1 536.7 314.9 521.9 C315.8 507.2 306.3 509.0 312.3 498.6 Z" fill="#d4688c" opacity="0.7"/>
<path d="M354.0 459.5 C355.9 465.0 352.9 466.8 348.8 481.3 C344.8 495.8 347.1 488.5 341.8 503.1 C336.5 517.6 336.2 523.6 332.8 524.9 C329.4 526.2 330.5 520.2 331.5 506.9 C332.6 493.7 332.2 499.2 336.0 485.1 C339.9 471.0 337.1 473.2 343.1 464.6 C349.1 456.1 352.1 453.9 354.0 459.5 Z" fill="#b9cc5e"/>
<path d="M268.0 563.0 C267.6 558.1 271.6 565.8 276.8 571.0 C282.0 576.2 279.0 572.7 283.6 578.6 C288.2 584.4 284.9 586.9 290.6 588.6 C296.3 590.3 294.7 588.6 300.7 583.6 C306.7 578.6 303.5 581.1 308.7 573.5 C313.9 566.0 310.4 566.8 316.3 560.9 C322.2 555.1 321.1 556.9 326.4 555.9 C331.6 554.9 330.6 550.5 332.1 557.9 C333.6 565.3 334.7 567.1 330.9 578.1 C327.1 589.0 329.2 584.8 320.8 590.6 C312.4 596.5 315.8 594.0 305.7 595.7 C295.7 597.3 299.9 599.0 290.6 595.7 C281.4 592.3 285.6 596.5 278.1 585.6 C270.5 574.7 268.4 567.8 268.0 563.0 Z" fill="#da7a80"/>
<path d="M254.2 513.9 C254.7 519.4 254.5 518.9 255.9 530.3 C257.3 541.6 254.4 536.1 258.4 547.9 C262.5 559.6 261.4 554.6 268.0 565.5 C274.5 576.4 274.7 575.5 278.1 580.6" fill="none" stroke="#cb62b3" stroke-width="2" stroke-linecap="round" stroke-linejoin="round"/>
<path d="M295.7 527.7 C296.5 531.9 297.5 533.6 298.2 540.3 C298.8 547.0 297.8 545.3 297.7 547.9" fill="none" stroke="#a9b552" stroke-width="3" stroke-linecap="round" stroke-linejoin="round"/>
<path d="M300.7 550.4 C299.0 552.9 298.6 553.3 295.7 557.9 C292.7 562.5 293.1 562.1 291.9 564.2" fill="none" stroke="#b0a850" stroke-width="4" stroke-linecap="round" stroke-linejoin="round"/>
<path d="M262.5 367.2 C266.5 363.4 265.9 366.5 272.8 370.9 C279.7 375.3 277.2 373.5 283.2 380.4 C289.2 387.3 288.2 384.2 290.8 391.7 C293.3 399.2 295.2 399.2 290.8 403.0 C286.4 406.8 285.4 405.5 277.5 403.0 C269.7 400.5 272.8 402.4 267.2 395.5 C261.5 388.6 262.1 391.7 260.6 382.3 C259.0 372.8 258.4 370.9 262.5 367.2 Z" fill="#c45ea4" opacity="0.65"/>
<path d="M203.0 499.0 C210.3 501.7 207.7 503.3 225.0 507.0 C242.3 510.7 235.0 511.0 255.0 510.0 C275.0 509.0 265.0 510.0 285.0 504.0 C305.0 498.0 295.0 500.7 315.0 492.0 C335.0 483.3 325.0 488.0 345.0 478.0 C365.0 468.0 365.0 467.3 375.0 462.0" fill="none" stroke="#c8609f" stroke-width="5" stroke-linecap="round" stroke-linejoin="round"/>
<path d="M232.1 511.4 C232.1 518.5 231.9 518.5 232.1 532.8 C232.3 547.0 232.2 539.9 232.7 554.2 C233.3 568.4 233.2 562.7 233.8 575.6 C234.4 588.4 234.4 587.0 234.7 592.7" fill="none" stroke="#e09c88" stroke-width="3" stroke-linecap="round" stroke-linejoin="round"/>
<path d="M212.8 511.4 C213.0 517.1 212.5 518.5 213.3 528.5 C214.0 538.5 214.4 537.1 215.0 541.3" fill="none" stroke="#e6aa90" stroke-width="4" stroke-linecap="round" stroke-linejoin="round"/>
</g>
<g id="face" filter="url(#b1)">
<path d="M214.0 285.7 C216.9 281.3 218.7 282.3 225.0 284.9 C231.3 287.6 226.6 286.5 232.9 293.6 C239.2 300.7 238.7 298.3 243.9 306.2 C249.1 314.0 247.6 309.3 248.6 317.2 C249.7 325.0 248.1 322.4 247.0 329.7 C246.0 337.1 248.6 333.4 245.5 339.2 C242.3 344.9 244.4 342.3 237.6 347.0 C230.8 351.8 232.9 349.9 225.0 353.3 C217.2 356.7 220.3 356.2 214.0 357.3 C207.7 358.3 207.7 361.5 206.2 356.5 C204.6 351.5 207.2 352.3 209.3 342.3 C211.4 332.4 210.6 337.1 212.5 326.6 C214.3 316.1 213.5 320.3 214.8 310.9 C216.1 301.4 216.6 306.7 216.4 298.3 C216.1 289.9 211.1 290.2 214.0 285.7 Z" fill="#cb62b3"/>
<path d="M214.8 286.5 C217.2 281.3 220.3 280.7 223.5 285.7 C226.6 290.7 225.3 292.0 224.2 301.4 C223.2 310.9 223.2 308.8 220.3 314.0 C217.4 319.3 216.9 321.4 215.6 317.2 C214.3 313.0 216.6 311.7 216.4 301.4 C216.1 291.2 212.5 291.8 214.8 286.5 Z" fill="#da7a80" opacity="0.8"/>
<path d="M225.0 306.2 C230.8 305.1 232.4 305.6 239.2 310.9 C246.0 316.1 247.6 317.7 245.5 321.9 C243.4 326.1 240.2 323.5 232.9 323.5 C225.6 323.5 227.1 325.0 223.5 321.9 C219.8 318.7 221.4 319.3 221.9 314.0 C222.4 308.8 219.3 307.2 225.0 306.2 Z" fill="#b9569f" opacity="0.7"/>
<path d="M226.3 291.2 C228.1 289.1 231.2 289.4 234.5 292.0 C237.7 294.6 237.9 297.0 236.0 299.1 C234.2 301.2 232.2 300.9 229.0 298.3 C225.7 295.7 224.5 293.3 226.3 291.2 Z" fill="#b9cc5e"/>
<path d="M223.5 325.8 C226.6 323.7 227.1 323.7 232.9 325.0 C238.7 326.3 236.3 326.1 240.8 329.7 C245.2 333.4 245.2 331.8 246.3 336.0 C247.3 340.2 246.8 341.3 243.9 342.3 C241.0 343.4 241.8 341.8 237.6 339.2 C233.4 336.6 236.0 337.1 231.3 334.5 C226.6 331.8 226.1 334.2 223.5 331.3 C220.8 328.4 220.3 327.9 223.5 325.8 Z" fill="#b9cc5e"/>
<path d="M221.9 343.9 C225.8 342.9 225.8 343.9 224.2 347.0 C222.7 350.2 222.7 349.7 217.2 353.3 C211.7 357.0 211.7 357.3 207.7 358.1 C203.8 358.8 203.8 358.3 205.4 355.7 C206.9 353.1 206.9 354.1 212.5 350.2 C218.0 346.3 218.0 344.9 221.9 343.9 Z" fill="#b9cc5e"/>
<path d="M222.7 345.8 C224.5 343.8 224.5 343.5 228.2 340.0 C231.8 336.5 231.8 336.8 233.7 335.3" fill="none" stroke="#b9cc5e" stroke-width="2.2" stroke-linecap="round" stroke-linejoin="round"/>
<path d="M236.4 341.1 C238.1 339.0 239.9 338.9 242.0 340.8 C244.1 342.6 244.4 344.6 242.6 346.7 C240.9 348.8 238.9 348.9 236.8 347.0 C234.7 345.2 234.6 343.2 236.4 341.1 Z" fill="#efc896"/>
<path d="M209.3 295.2 C212.2 293.1 213.8 293.1 215.6 296.7 C217.4 300.4 215.9 299.9 214.8 306.2 C213.8 312.5 213.5 308.8 212.5 315.6 C211.4 322.4 212.7 318.7 211.7 326.6 C210.6 334.5 210.9 330.8 209.3 339.2 C207.7 347.6 209.6 346.0 206.9 351.8 C204.3 357.5 204.9 357.5 201.4 356.5 C198.0 355.4 198.8 354.9 196.7 348.6 C194.6 342.3 194.4 345.5 195.2 337.6 C195.9 329.7 196.2 333.4 199.1 325.0 C202.0 316.6 201.2 319.8 203.8 312.5 C206.4 305.1 205.1 308.8 206.9 303.0 C208.8 297.3 206.4 297.3 209.3 295.2 Z" fill="#efc896"/>
<path d="M208.5 302.2 C206.4 306.4 206.4 306.7 202.2 314.8 C198.0 322.9 199.4 319.8 195.9 326.6 C192.5 333.4 194.1 329.5 192.0 335.3 C189.9 341.0 190.4 341.0 189.7 343.9" fill="none" stroke="#cb62b3" stroke-width="3" stroke-linecap="round" stroke-linejoin="round"/>
<path d="M188.9 403.4 C197.7 404.8 196.4 406.0 215.3 407.7 C234.2 409.5 227.9 407.1 245.5 408.7 C263.1 410.3 254.3 411.2 268.1 412.5 C281.9 413.7 280.7 412.5 287.0 412.5" fill="none" stroke="#b9cc5e" stroke-width="3.6" stroke-linecap="round" stroke-linejoin="round"/>
<path d="M188.9 405.3 C197.7 406.8 196.4 408.0 215.3 409.8 C234.2 411.6 227.9 409.2 245.5 410.8 C263.1 412.3 254.3 413.1 268.1 414.3 C281.9 415.5 280.7 414.3 287.0 414.3" fill="none" stroke="#cb62b3" stroke-width="1.2" stroke-linecap="round" stroke-linejoin="round"/>
<path d="M198.3 425.7 C204.6 426.9 201.4 428.5 217.2 429.4 C232.9 430.4 231.6 431.0 245.5 428.5 C259.3 426.0 254.3 424.1 258.7 421.9" fill="none" stroke="#cb62b3" stroke-width="3" stroke-linecap="round" stroke-linejoin="round"/>
<path d="M221.8 220.7 C221.5 224.2 220.5 222.3 220.8 231.3 C221.2 240.4 222.1 242.3 222.7 247.8" fill="none" stroke="#da7a80" stroke-width="2" stroke-linecap="round" stroke-linejoin="round"/>
<path d="M230.8 224.2 C229.6 229.7 228.8 229.0 227.2 240.8 C225.6 252.5 226.4 253.3 226.0 259.6" fill="none" stroke="#da7a80" stroke-width="1.5" stroke-linecap="round" stroke-linejoin="round"/>
<path d="M207.2 231.3 C206.4 236.8 204.8 236.8 204.8 247.8 C204.8 258.8 206.4 258.8 207.2 264.3" fill="none" stroke="#da7a80" stroke-width="1.2" stroke-linecap="round" stroke-linejoin="round"/>
<path d="M259.1 231.3 C259.8 236.8 261.4 236.8 261.4 247.8 C261.4 258.8 259.8 258.8 259.1 264.3" fill="none" stroke="#da7a80" stroke-width="1.2" stroke-linecap="round" stroke-linejoin="round"/>
<path d="M188.3 208.9 C194.6 209.7 195.4 209.3 207.2 211.3 C219.0 213.2 215.8 211.7 223.7 214.8 C231.5 218.0 228.4 218.7 230.8 220.7" fill="none" stroke="#b9cc5e" stroke-width="1.2" stroke-linecap="round" stroke-linejoin="round"/>
<path d="M254.3 210.6 C260.6 210.0 260.6 209.9 273.2 208.9 C285.8 208.0 279.8 208.9 292.1 207.7 C304.3 206.6 304.0 206.2 310.0 205.4" fill="none" stroke="#b9cc5e" stroke-width="1.2" stroke-linecap="round" stroke-linejoin="round"/>
<path d="M170.8 267.7 C177.0 265.5 176.4 268.6 187.7 272.5 C199.1 276.4 196.2 276.7 204.7 279.4 C213.2 282.1 211.3 276.9 213.2 280.6 C215.1 284.2 215.1 286.2 210.4 290.4 C205.7 294.6 206.6 291.6 199.1 293.2 C191.5 294.8 195.9 295.4 187.7 295.1 C179.6 294.8 180.8 297.6 174.5 292.3 C168.2 286.9 170.1 287.2 168.9 279.1 C167.6 270.9 164.5 269.9 170.8 267.7 Z" fill="#cb62b3"/>
<path d="M172.6 271.5 C175.8 270.1 182.4 271.7 187.7 274.3 C193.1 277.0 191.8 278.0 188.7 279.4 C185.5 280.9 183.6 281.3 178.3 278.7 C173.0 276.0 169.5 273.0 172.6 271.5 Z" fill="#b9cc5e"/>
<path d="M185.8 281.3 C193.4 280.7 202.3 282.0 210.4 283.8 C218.4 285.5 217.5 286.0 210.0 286.6 C202.5 287.2 195.8 287.4 187.7 285.7 C179.7 283.9 178.3 281.9 185.8 281.3 Z" fill="#b9cc5e"/>
<path d="M178.3 285.7 C182.7 283.8 187.7 285.2 197.2 286.6 C206.6 288.1 206.6 287.2 206.6 290.0 C206.6 292.8 204.7 294.3 197.2 295.1 C189.6 295.8 190.3 295.4 184.0 292.3 C177.7 289.1 173.9 287.5 178.3 285.7 Z" fill="#efc896"/>
<path d="M250.0 272.5 C256.3 264.6 253.1 269.6 268.9 270.6 C284.6 271.5 278.9 270.9 297.2 275.3 C315.4 279.7 320.4 278.1 323.6 283.8 C326.7 289.4 320.4 290.7 306.6 292.3 C292.8 293.8 295.9 290.4 282.1 288.5 C268.2 286.6 273.9 286.0 265.1 286.6 C256.3 287.2 260.7 287.9 255.7 290.4 C250.6 292.9 251.9 300.1 250.0 294.2 C248.1 288.2 243.7 280.3 250.0 272.5 Z" fill="#cb62b3"/>
<path d="M233.0 279.4 C234.3 276.8 233.0 277.4 240.6 277.2 C248.1 276.9 250.1 275.5 255.7 278.7 C261.2 281.8 258.4 281.9 257.2 286.6 C255.9 291.3 256.2 291.3 251.9 292.6 C247.6 294.0 249.4 293.3 244.3 290.8 C239.3 288.2 240.6 288.9 236.8 285.1 C233.0 281.3 231.8 282.1 233.0 279.4 Z" fill="#b9cc5e"/>
<path d="M261.3 278.1 C266.4 274.5 263.8 275.8 272.6 275.8 C281.4 275.8 280.5 276.1 287.7 278.1 C295.0 280.1 295.6 279.1 294.3 281.9 C293.1 284.7 292.5 285.0 284.0 286.6 C275.5 288.2 277.7 286.6 268.9 286.6 C260.1 286.6 260.1 289.4 257.5 286.6 C255.0 283.8 256.3 281.7 261.3 278.1 Z" fill="#efc896"/>
<path d="M267.0 279.4 C269.8 277.1 271.3 277.5 276.4 278.7 C281.6 279.8 282.5 280.3 282.5 282.8 C282.5 285.3 281.3 285.3 276.4 286.2 C271.6 287.2 271.1 287.9 267.9 285.7 C264.8 283.4 264.2 281.8 267.0 279.4 Z" fill="#cb62b3"/>
<path d="M268.9 275.3 C278.3 276.7 279.6 276.2 297.2 279.4 C314.8 282.7 313.5 283.2 321.7 285.1" fill="none" stroke="#b9cc5e" stroke-width="1.2" stroke-linecap="round" stroke-linejoin="round"/>
<path d="M279.0 403.6 C280.1 401.9 281.4 401.7 283.0 403.1 C284.5 404.5 284.9 406.1 283.7 407.8 C282.5 409.6 281.0 409.7 279.4 408.3 C277.9 406.9 277.8 405.3 279.0 403.6 Z" fill="#efc896"/>
<path d="M289.3 413.0 C290.4 411.3 291.7 411.0 293.1 412.5 C294.5 414.1 294.7 416.0 293.6 417.7 C292.5 419.5 291.2 419.3 289.8 417.7 C288.4 416.2 288.2 414.7 289.3 413.0 Z" fill="#efc896"/>
</g>
<g id="rim" filter="url(#b1)">
<path d="M207.0 186.0 L225.0 171.0 L244.0 151.0 L266.0 133.5 L290.0 123.0" fill="none" stroke="#c4c060" stroke-width="4" stroke-linecap="round" stroke-linejoin="round"/>
<path d="M203.0 190.0 L187.0 210.5 L171.0 230.0 L163.2 249.0 L163.2 262.0 L168.0 271.5 L174.5 280.0 L178.3 286.6 L171.7 302.0 L170.0 315.0 L174.5 324.0 L184.0 337.5 L186.8 350.0 L189.0 359.0 L185.5 378.0 L185.5 406.0 L190.0 428.0 L198.2 450.0 L196.6 472.0 L192.5 481.0 L199.0 498.0 L211.0 508.0" fill="none" stroke="#cb62b3" stroke-width="5" stroke-linecap="round" stroke-linejoin="round"/>
<path d="M418.0 204.0 L426.0 226.0 L429.0 248.0 L431.0 274.0 L428.0 302.0 L424.0 334.0 L430.0 366.0 L440.0 397.0 L454.0 421.0 L470.0 436.0 L492.0 458.0" fill="none" stroke="#cb62b3" stroke-width="6" stroke-linecap="round" stroke-linejoin="round"/>
</g>
<g id="ear" filter="url(#b1)">
<path d="M399.3 262.0 C404.2 253.1 404.5 256.5 412.1 255.6 C419.8 254.7 416.7 254.7 422.2 259.2 C427.7 263.8 426.2 259.8 428.6 269.3 C431.1 278.8 430.7 277.2 429.5 287.6 C428.3 298.0 428.9 294.9 424.9 300.4 C421.0 305.9 421.3 298.6 417.6 304.1 C414.0 309.6 417.6 309.6 414.0 316.9 C410.3 324.2 412.7 323.6 406.6 326.1 C400.5 328.5 400.5 328.5 395.6 324.2 C390.8 320.0 391.4 321.2 392.0 313.3 C392.6 305.3 395.6 310.8 397.5 300.4 C399.3 290.1 396.9 294.9 397.5 282.1 C398.1 269.3 394.4 270.8 399.3 262.0 Z" fill="#cb62b3"/>
<path d="M406.6 274.8 C409.4 272.4 410.2 273.6 414.0 276.6 C417.7 279.7 416.6 277.9 418.0 284.0 C419.3 290.1 419.0 289.1 418.0 294.9 C416.9 300.7 417.1 299.5 414.9 301.4 C412.6 303.2 413.7 303.2 411.2 300.4 C408.8 297.7 409.4 298.6 407.5 293.1 C405.7 287.6 406.0 290.1 405.7 284.0 C405.4 277.9 403.9 277.2 406.6 274.8 Z" fill="#b9cc5e"/>
<path d="M397.5 294.9 C399.9 293.1 401.1 295.9 406.6 298.6 C412.1 301.4 410.9 298.3 414.0 303.2 C417.0 308.1 415.8 306.8 415.8 313.3 C415.8 319.7 417.0 317.5 414.0 322.4 C410.9 327.3 412.1 326.7 406.6 327.9 C401.1 329.1 402.4 328.5 397.5 326.1 C392.6 323.6 392.0 324.9 392.0 320.6 C392.0 316.3 395.0 318.8 397.5 313.3 C399.9 307.8 399.3 310.2 399.3 304.1 C399.3 298.0 395.0 296.8 397.5 294.9 Z" fill="#b9cc5e"/>
<path d="M377.3 322.4 C382.2 316.3 382.2 318.8 392.0 320.6 C401.7 322.4 397.5 326.1 406.6 327.9 C415.8 329.7 414.0 323.6 419.5 326.1 C424.9 328.5 422.5 327.3 423.1 335.2 C423.7 343.2 426.8 342.6 421.3 349.9 C415.8 357.2 416.7 354.8 406.6 357.2 C396.6 359.7 397.5 361.5 391.1 357.2 C384.7 352.9 392.0 350.5 387.4 344.4 C382.8 338.3 380.7 346.2 377.3 338.9 C374.0 331.6 372.4 328.5 377.3 322.4 Z" fill="#b9cc5e"/>
<path d="M381.0 301.4 C384.5 297.7 387.7 297.7 392.0 300.4 C396.3 303.2 395.0 305.0 393.8 309.6 C392.6 314.2 392.5 313.6 388.3 314.2 C384.2 314.8 383.8 315.7 381.4 311.4 C378.9 307.2 377.4 305.0 381.0 301.4 Z" fill="#cb62b3"/>
<path d="M388.3 324.6 C391.9 321.7 394.9 321.6 399.3 323.9 C403.7 326.2 402.7 327.7 401.5 331.6 C400.3 335.5 399.9 335.3 395.6 335.6 C391.4 335.9 391.1 336.2 388.7 332.5 C386.2 328.8 384.8 327.5 388.3 324.6 Z" fill="#cb62b3"/>
<path d="M375.5 336.2 C379.2 331.9 382.5 332.2 387.4 335.2 C392.3 338.3 391.1 339.8 390.1 345.3 C389.2 350.8 389.2 350.8 384.7 351.7 C380.1 352.6 379.5 353.2 376.4 348.1 C373.4 342.9 371.8 340.4 375.5 336.2 Z" fill="#cb62b3"/>
<path d="M406.6 271.1 C407.5 265.9 409.3 266.3 413.0 267.5 C416.8 268.7 417.1 269.3 418.0 274.8 C418.9 280.3 418.4 281.2 415.8 284.0 C413.2 286.7 413.3 287.3 410.3 283.0 C407.2 278.8 405.7 276.3 406.6 271.1 Z" fill="#cb62b3"/>
<path d="M406.6 342.6 C410.0 335.2 411.8 336.5 417.6 338.9 C423.4 341.3 422.2 342.6 424.0 349.9 C425.9 357.2 428.6 357.2 423.1 360.9 C417.6 364.5 413.0 367.0 407.5 360.9 C402.1 354.8 403.3 349.9 406.6 342.6 Z" fill="#cb62b3"/>
</g>
<g id="earfine" filter="url(#b05)">
<path d="M382.8 283.0 C386.5 277.9 387.1 275.7 393.8 267.5 C400.5 259.2 396.9 262.9 403.0 258.3 C409.1 253.7 406.0 254.2 412.1 253.7 C418.2 253.2 416.1 252.9 421.3 256.8 C426.5 260.8 424.5 259.0 427.7 265.6 C430.9 272.2 430.1 268.7 430.8 276.6 C431.5 284.6 431.7 282.0 429.7 289.5 C427.8 296.9 428.9 294.6 424.9 299.0 C421.0 303.4 420.3 301.4 418.0 302.6" fill="none" stroke="#b9cc5e" stroke-width="1.4" stroke-linecap="round" stroke-linejoin="round"/>
<path d="M424.9 261.1 C426.2 261.1 426.7 261.7 428.6 267.5 C430.5 273.3 430.5 270.5 430.6 278.5 C430.7 286.4 430.9 284.3 429.0 291.3 C427.1 298.3 427.1 297.2 424.9 299.5 C422.8 301.8 422.4 301.6 422.6 298.2 C422.7 294.9 423.8 296.0 425.3 289.5 C426.8 282.9 427.1 285.8 427.0 278.5 C426.8 271.1 425.6 273.3 424.9 267.5 C424.3 261.7 423.7 261.1 424.9 261.1 Z" fill="#efc896"/>
<path d="M387.4 279.4 C389.2 277.7 389.5 277.5 392.9 274.4 C396.3 271.4 395.9 271.6 397.5 270.2" fill="none" stroke="#efc896" stroke-width="1.6" stroke-linecap="round" stroke-linejoin="round"/>
<path d="M411.2 288.0 C412.8 285.5 415.0 285.6 417.3 287.6 C419.5 289.6 419.6 291.6 418.0 294.0 C416.4 296.5 414.7 297.0 412.5 294.9 C410.2 292.9 409.6 290.4 411.2 288.0 Z" fill="#efc896"/>
<path d="M404.8 306.8 C407.5 304.4 409.3 303.8 412.1 305.9 C414.9 308.1 414.1 307.9 413.2 313.3 C412.3 318.6 413.7 319.4 409.4 321.9 C405.0 324.3 403.6 322.2 400.2 320.6 C396.9 318.9 398.1 319.4 399.3 316.9 C400.5 314.5 402.1 316.6 403.9 313.3 C405.7 309.9 402.1 309.3 404.8 306.8 Z" fill="#efc896"/>
<path d="M390.7 327.9 C391.9 326.8 393.3 326.6 394.7 327.5 C396.2 328.5 396.3 329.7 395.1 330.8 C393.9 332.0 392.5 332.0 391.1 331.0 C389.6 330.0 389.5 329.1 390.7 327.9 Z" fill="#efc896"/>
<path d="M380.6 342.6 C381.8 341.1 383.2 341.0 384.7 342.2 C386.1 343.4 386.2 344.8 385.0 346.2 C383.8 347.7 382.5 347.8 381.0 346.6 C379.5 345.4 379.4 344.0 380.6 342.6 Z" fill="#efc896"/>
</g>
<!--/LAYERS-->
</g>
</svg>
</div>
<div id="status"><span>0 (1:1) | perspShape  | samples 3/2/2/2/2/2 | 1253.05 MB</span></div>
</body>
</html>
